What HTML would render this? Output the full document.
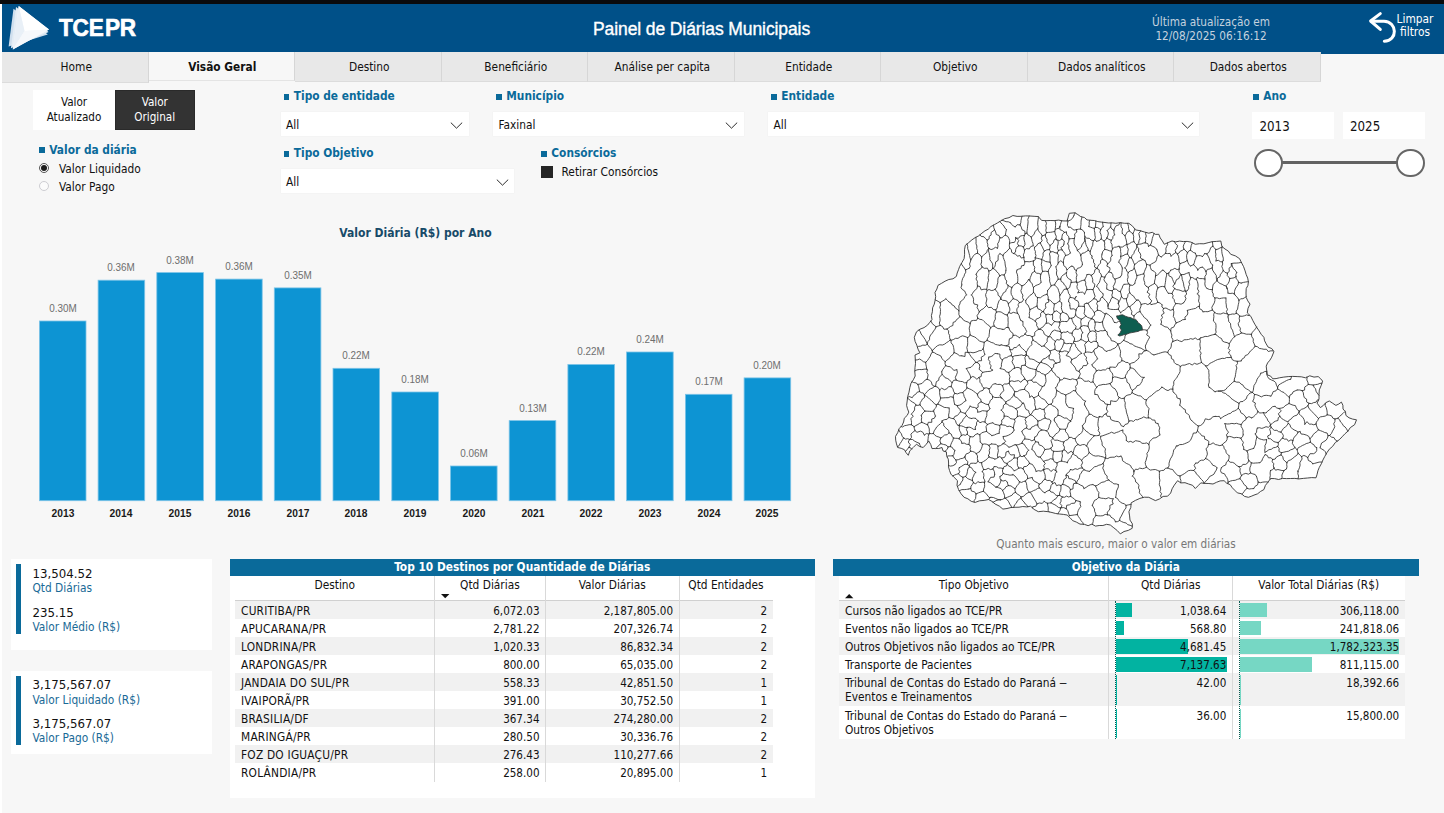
<!DOCTYPE html>
<html lang="pt-BR">
<head>
<meta charset="utf-8">
<title>Painel de Diárias Municipais</title>
<style>
*{box-sizing:border-box;margin:0;padding:0}
html,body{width:1444px;height:813px;overflow:hidden}
body{position:relative;background:#f7f7f7;font-family:"DejaVu Sans Condensed","Liberation Sans",sans-serif;font-size:11.8px;color:#111}
.abs{position:absolute}
.t{position:absolute;white-space:nowrap;line-height:14px}
.b{font-weight:bold}
#topbar{left:0;top:0;width:1444px;height:4px;background:#0a0a0c}
#lstrip{left:0;top:4px;width:2px;height:809px;background:#fff}
#hdr{left:2px;top:4px;width:1442px;height:49.6px;background:#005088}
.tab{position:absolute;top:52.3px;height:29.5px;width:146.5px;background:#e8e8e8;border-right:1px solid #d6d6d6;border-bottom:1px solid #dcdcdc;text-align:center;line-height:30.4px;font-size:11.8px;color:#111;padding-left:3px}
.tab.act{background:#f7f7f7;font-weight:bold;border-bottom:1px solid #e4e4e4;height:29px;padding-left:2px}
.flabel{position:absolute;font-weight:bold;font-size:11.8px;color:#0a6a9a;white-space:nowrap;line-height:14px}
.flabel i{display:inline-block;width:5.8px;height:5.8px;background:#0a6a9a;margin-right:4.5px;vertical-align:0.5px}
.dd{position:absolute;background:#fff;height:24.2px;font-size:11.8px;line-height:26px;padding-left:5.5px;color:#111;box-shadow:0 0 0 0.5px #f1f1f1}
.dd svg{position:absolute;right:5.5px;top:10px}
.card{position:absolute;background:#fff}
.kv{position:absolute;left:32.5px;font-size:13.1px;color:#111;white-space:nowrap;line-height:15px}
.kl{position:absolute;left:32.5px;font-size:11.8px;color:#1a6a96;white-space:nowrap;line-height:14px}
.acc{position:absolute;left:16px;width:4.5px;background:#0a6a9a}
.ttl{position:absolute;background:#0a6a9a;color:#fff;font-weight:bold;font-size:11.8px;text-align:center;line-height:16.5px;height:17px}
.row{position:absolute;height:18px}
.g{background:#f1f1f1}
.w{background:#fff}
.c{position:absolute;white-space:nowrap;line-height:14px;font-size:11.8px;color:#111}
.r{text-align:right;font-size:11.55px}
.vl{position:absolute;width:1px;background:#d9d9d9}
.hl{position:absolute;height:1px;background:#d0d0d0}
.bl{position:absolute;white-space:nowrap;font-family:"Liberation Sans",sans-serif;font-size:11px;color:#6e6e6e;text-align:center;width:60px;line-height:12px;transform:scaleX(0.9)}
.yl{position:absolute;white-space:nowrap;font-family:"Liberation Sans",sans-serif;font-size:11.5px;font-weight:bold;color:#1a1a1a;text-align:center;width:60px;line-height:12px;top:506.8px;transform:scaleX(0.89)}
.bar{position:absolute;background:#0d94d3;border:1px solid #58b4e0;border-bottom-color:#8ecbe9}
</style>
</head>
<body>
<div class="abs" id="topbar"></div>
<div class="abs" id="lstrip"></div>
<div class="abs" id="hdr"></div>

<!-- logo -->
<svg class="abs" style="left:2px;top:4px" width="150" height="49" viewBox="2 4 150 49">
  <polygon points="13.5,8.8 47.8,34.5 8.6,46.4" fill="#cfdfee"/>
  <polygon points="16,7 48.6,32 11,48.2" fill="#e4edf5"/>
  <polygon points="18.7,6 49,29.6 12.8,49.6" fill="#f3f7fb"/>
  <polygon points="18.7,6 49,29.6 24.5,31" fill="#ffffff"/>
  <polygon points="18.7,6 24.5,31 12.8,49.6" fill="#e9f0f7"/>
  <polygon points="24.5,31 49,29.6 12.8,49.6" fill="#f6f8fb"/>
</svg>
<div class="t b" style="left:58.5px;top:13.5px;font-family:'Liberation Sans',sans-serif;font-size:24.8px;line-height:28px;color:#fff;letter-spacing:-0.2px;transform:scaleX(0.91);transform-origin:0 0;-webkit-text-stroke:0.7px #fff">TCE<span style="margin-left:1.5px">PR</span></div>

<div class="t" id="title" style="left:593px;top:18px;font-family:'Liberation Sans',sans-serif;font-size:17.5px;line-height:22px;color:#fff;letter-spacing:-0.1px;-webkit-text-stroke:0.35px #fff">Painel de Diárias Municipais</div>

<div class="t" style="left:1111px;top:14.5px;width:200px;text-align:center;color:#c4d2df;font-size:11.7px;line-height:14px">Última atualização em<br>12/08/2025 06:16:12</div>

<svg class="abs" style="left:1366px;top:10px" width="34" height="36" viewBox="1366 10 34 36">
  <path d="M1380.3 13.6 L1370.6 21 L1380.3 29.4" fill="none" stroke="#fff" stroke-width="3" stroke-linecap="round" stroke-linejoin="round"/>
  <path d="M1371.5 21.2 L1384 21.2 C1397.5 21.5 1398 41 1384.3 41.2" fill="none" stroke="#fff" stroke-width="3" stroke-linecap="round"/>
</svg>
<div class="t" style="left:1390px;top:12.5px;width:50px;text-align:center;color:#fff;font-size:11.8px;line-height:13.8px">Limpar<br>filtros</div>

<!-- tabs -->
<div class="tab" style="left:2px;height:30.3px">Home</div>
<div class="tab act" style="left:148.5px">Visão Geral</div>
<div class="tab" style="left:295px">Destino</div>
<div class="tab" style="left:441.5px">Beneficiário</div>
<div class="tab" style="left:588px">Análise per capita</div>
<div class="tab" style="left:734.5px">Entidade</div>
<div class="tab" style="left:881px">Objetivo</div>
<div class="tab" style="left:1027.5px">Dados analíticos</div>
<div class="tab" style="left:1174px">Dados abertos</div>

<!-- toggle buttons -->
<div class="abs" style="left:33px;top:89.5px;width:82px;height:40.5px;background:#fff;text-align:center;font-size:11.6px;line-height:15px;padding-top:5.6px">Valor<br>Atualizado</div>
<div class="abs" style="left:115px;top:89.5px;width:79.5px;height:40.5px;background:#333;color:#fff;text-align:center;font-size:11.6px;line-height:15px;padding-top:4.6px;border:1px solid #2a2a2a">Valor<br>Original</div>

<!-- Valor da diária -->
<div class="flabel" style="left:39px;top:142.5px"><i></i>Valor da diária</div>
<div class="abs" style="left:39px;top:162.7px;width:10.2px;height:10.2px;border-radius:50%;border:1px solid #555;background:#fff"></div>
<div class="abs" style="left:40.9px;top:164.6px;width:6.4px;height:6.4px;border-radius:50%;background:#1c1c1c"></div>
<div class="t" style="left:59px;top:161.5px">Valor Liquidado</div>
<div class="abs" style="left:39px;top:180.7px;width:10.2px;height:10.2px;border-radius:50%;border:1px solid #cdcdd2;background:#fbfbfb"></div>
<div class="t" style="left:59px;top:179.5px">Valor Pago</div>

<!-- filters -->
<div class="flabel" style="left:283.5px;top:89px"><i></i>Tipo de entidade</div>
<div class="dd" style="left:280.5px;top:111.5px;width:188px">All<svg width="13" height="7" viewBox="0 0 13 7"><path d="M0.8 0.6 L6.5 6.2 L12.2 0.6" fill="none" stroke="#2b2b2b" stroke-width="1"/></svg></div>
<div class="flabel" style="left:496px;top:89px"><i></i>Município</div>
<div class="dd" style="left:493px;top:111.5px;width:250.5px">Faxinal<svg width="13" height="7" viewBox="0 0 13 7"><path d="M0.8 0.6 L6.5 6.2 L12.2 0.6" fill="none" stroke="#2b2b2b" stroke-width="1"/></svg></div>
<div class="flabel" style="left:771px;top:89px"><i></i>Entidade</div>
<div class="dd" style="left:768px;top:111.5px;width:431px">All<svg width="13" height="7" viewBox="0 0 13 7"><path d="M0.8 0.6 L6.5 6.2 L12.2 0.6" fill="none" stroke="#2b2b2b" stroke-width="1"/></svg></div>
<div class="flabel" style="left:283.5px;top:146px"><i></i>Tipo Objetivo</div>
<div class="dd" style="left:280.5px;top:168.5px;width:233.5px">All<svg width="13" height="7" viewBox="0 0 13 7"><path d="M0.8 0.6 L6.5 6.2 L12.2 0.6" fill="none" stroke="#2b2b2b" stroke-width="1"/></svg></div>
<div class="flabel" style="left:541px;top:146px"><i></i>Consórcios</div>
<div class="abs" style="left:541px;top:166px;width:12px;height:12px;background:#252525"></div>
<div class="t" style="left:561.5px;top:165px">Retirar Consórcios</div>

<!-- Ano -->
<div class="flabel" style="left:1253px;top:89px"><i></i>Ano</div>
<div class="abs" style="left:1252px;top:112px;width:82px;height:27px;background:#fff;font-size:13.2px;line-height:29.6px;padding-left:7.5px">2013</div>
<div class="abs" style="left:1342.5px;top:112px;width:82px;height:27px;background:#fff;font-size:13.2px;line-height:29.6px;padding-left:7.5px">2025</div>
<div class="abs" style="left:1268px;top:161.4px;width:143px;height:3px;background:#626262"></div>
<div class="abs" style="left:1254.3px;top:148.5px;width:28.8px;height:28.8px;border-radius:50%;background:#fff;border:2px solid #666"></div>
<div class="abs" style="left:1396.3px;top:148.5px;width:28.8px;height:28.8px;border-radius:50%;background:#fff;border:2px solid #666"></div>

<!-- bar chart -->
<div class="t b" style="left:265.5px;top:226px;width:300px;text-align:center;color:#174a68;font-size:12px">Valor Diária (R$) por Ano</div>
<svg class="abs" style="left:0;top:260px" width="820" height="250" viewBox="0 260 820 250"><g fill="#0d94d3" stroke="#7cc4e8" stroke-width="0.8"><rect x="39.4" y="321.0" width="46.6" height="179.7"/><rect x="98.1" y="280.2" width="46.6" height="220.5"/><rect x="156.8" y="272.6" width="46.6" height="228.1"/><rect x="215.6" y="279.1" width="46.6" height="221.6"/><rect x="274.3" y="287.9" width="46.6" height="212.8"/><rect x="333.0" y="368.3" width="46.6" height="132.4"/><rect x="391.8" y="392.0" width="46.6" height="108.7"/><rect x="450.5" y="466.0" width="46.6" height="34.7"/><rect x="509.2" y="420.6" width="46.6" height="80.1"/><rect x="567.9" y="364.5" width="46.6" height="136.2"/><rect x="626.6" y="352.0" width="46.6" height="148.7"/><rect x="685.4" y="394.3" width="46.6" height="106.4"/><rect x="744.1" y="377.9" width="46.6" height="122.8"/></g></svg>
<div class="bl" style="left:32.7px;top:301.9px">0.30M</div>
<div class="yl" style="left:32.7px">2013</div>
<div class="bl" style="left:91.4px;top:261.1px">0.36M</div>
<div class="yl" style="left:91.4px">2014</div>
<div class="bl" style="left:150.2px;top:253.5px">0.38M</div>
<div class="yl" style="left:150.2px">2015</div>
<div class="bl" style="left:208.9px;top:260.0px">0.36M</div>
<div class="yl" style="left:208.9px">2016</div>
<div class="bl" style="left:267.6px;top:268.8px">0.35M</div>
<div class="yl" style="left:267.6px">2017</div>
<div class="bl" style="left:326.3px;top:349.2px">0.22M</div>
<div class="yl" style="left:326.3px">2018</div>
<div class="bl" style="left:385.1px;top:372.9px">0.18M</div>
<div class="yl" style="left:385.1px">2019</div>
<div class="bl" style="left:443.8px;top:446.9px">0.06M</div>
<div class="yl" style="left:443.8px">2020</div>
<div class="bl" style="left:502.5px;top:401.5px">0.13M</div>
<div class="yl" style="left:502.5px">2021</div>
<div class="bl" style="left:561.2px;top:345.4px">0.22M</div>
<div class="yl" style="left:561.2px">2022</div>
<div class="bl" style="left:619.9px;top:332.9px">0.24M</div>
<div class="yl" style="left:619.9px">2023</div>
<div class="bl" style="left:678.7px;top:375.2px">0.17M</div>
<div class="yl" style="left:678.7px">2024</div>
<div class="bl" style="left:737.4px;top:358.8px">0.20M</div>
<div class="yl" style="left:737.4px">2025</div>

<!-- map -->
<svg class="abs" style="left:880px;top:200px" width="500" height="345" viewBox="880 200 500 345">
<path d="M915.0 355.0L919.9 352.8L918.0 349.1L916.8 345.1L915.1 341.4L914.3 337.3L916.5 331.8L920.0 329.2L924.1 327.6L927.6 325.1L929.8 322.3L932.0 319.6L931.4 315.6L932.4 311.7L932.6 307.8L934.3 304.1L935.1 300.4L935.7 296.6L935.0 292.5L936.9 289.0L938.0 285.3L941.6 283.3L945.1 281.2L948.8 279.5L953.0 278.8L956.4 276.4L957.2 273.0L958.5 269.7L959.7 266.4L961.9 262.6L964.1 258.7L964.6 254.3L964.5 249.8L965.3 245.4L968.6 242.7L971.9 239.9L975.2 237.6L978.8 235.8L981.9 233.2L984.9 230.9L988.2 229.2L990.9 226.5L994.2 224.8L997.5 222.9L1000.7 221.0L1004.6 218.7L1009.0 217.7L1012.9 215.5L1017.1 216.4L1021.3 216.3L1025.6 215.9L1029.8 216.0L1034.1 216.3L1038.3 216.6L1041.6 220.4L1045.8 220.7L1050.1 220.5L1054.4 220.6L1058.6 220.1L1062.9 220.9L1067.1 221.0L1068.2 217.1L1069.3 213.3L1074.9 212.8L1077.9 214.6L1080.8 216.7L1084.4 217.5L1087.0 219.9L1090.6 220.3L1094.3 220.5L1097.8 221.6L1101.4 222.1L1105.0 222.5L1108.6 223.0L1112.2 222.9L1115.8 223.3L1120.2 222.7L1124.5 223.3L1128.9 223.3L1132.6 226.2L1135.5 229.9L1140.0 230.7L1144.4 232.0L1148.8 233.2L1152.3 232.3L1155.4 234.4L1158.8 234.3L1160.2 237.9L1162.4 241.0L1164.3 244.3L1168.1 242.6L1172.0 241.0L1175.7 241.9L1179.6 241.1L1183.3 241.6L1187.1 241.4L1190.9 242.1L1195.3 244.3L1199.5 243.7L1203.9 243.8L1208.1 242.7L1212.2 241.7L1216.5 241.4L1220.8 241.0L1221.9 246.5L1225.0 249.0L1228.3 251.1L1230.7 254.3L1235.4 255.9L1239.6 258.7L1241.5 262.7L1243.6 266.7L1245.1 270.9L1246.2 274.6L1247.7 278.1L1248.4 281.9L1247.9 285.5L1246.2 288.6L1246.0 293.0L1246.2 297.4L1247.8 300.9L1250.0 304.1L1248.0 308.3L1247.3 312.9L1250.8 316.3L1252.9 320.7L1254.8 324.2L1256.9 327.6L1259.1 330.9L1261.2 334.3L1263.9 337.3L1264.6 340.8L1266.2 343.9L1268.1 347.1L1271.8 348.6L1273.9 351.7L1271.7 357.2L1269.9 360.2L1267.6 362.9L1266.2 366.1L1266.7 370.5L1267.3 374.9L1270.6 376.1L1272.8 378.8L1276.1 378.6L1279.4 377.8L1283.8 377.1L1288.2 376.6L1292.6 376.4L1297.1 376.6L1301.3 376.8L1305.5 377.8L1309.8 375.8L1314.0 377.1L1318.2 376.6L1320.6 378.7L1322.6 381.1L1321.1 385.6L1319.3 389.9L1319.0 394.4L1319.0 399.0L1317.1 403.2L1320.4 407.6L1323.4 405.4L1325.9 402.6L1329.3 401.0L1332.6 403.2L1335.9 405.4L1338.8 404.0L1341.4 402.1L1342.9 405.3L1343.0 409.0L1345.5 411.8L1345.9 415.4L1349.0 417.8L1352.6 419.1L1356.5 419.8L1354.6 424.7L1350.3 427.6L1348.0 431.1L1344.9 433.8L1342.1 436.8L1339.2 439.8L1335.3 442.5L1332.6 446.4L1329.3 449.2L1326.9 452.7L1324.8 456.4L1322.9 460.0L1321.3 463.8L1319.3 467.4L1317.9 470.8L1317.1 474.3L1316.0 477.8L1311.7 477.6L1307.5 478.0L1303.3 478.4L1299.0 478.9L1294.8 478.4L1290.5 478.5L1286.5 478.6L1282.5 478.4L1278.6 479.5L1274.6 478.6L1270.6 478.5L1268.1 482.0L1265.4 485.4L1263.9 489.6L1260.6 491.4L1257.6 493.8L1254.0 495.1L1251.2 496.3L1248.4 497.3L1244.5 496.4L1241.4 493.7L1237.4 492.9L1234.8 490.3L1232.3 487.8L1230.2 484.7L1226.7 483.2L1224.1 480.7L1220.1 480.9L1216.5 482.3L1213.0 484.0L1208.9 483.5L1204.9 483.4L1200.8 482.9L1198.1 485.7L1195.3 488.5L1192.6 485.3L1188.6 484.0L1185.0 482.7L1180.9 482.9L1177.6 480.7L1174.3 485.1L1172.1 488.8L1170.7 493.0L1167.6 496.2L1163.1 496.4L1159.4 499.0L1155.4 500.6L1152.1 499.0L1148.8 497.3L1144.3 497.2L1139.9 498.4L1135.4 500.4L1131.1 502.9L1130.8 507.5L1128.9 511.7L1129.6 515.9L1130.0 520.1L1132.4 523.9L1132.2 528.3L1128.3 530.4L1124.0 531.5L1120.3 533.9L1117.3 530.6L1113.8 527.8L1110.3 525.0L1106.6 524.3L1102.9 525.5L1099.2 525.5L1095.5 526.1L1091.8 524.1L1088.1 525.7L1084.3 524.3L1080.0 524.1L1076.4 522.1L1072.6 520.6L1070.0 517.7L1067.1 515.0L1063.3 514.4L1059.5 514.0L1055.7 513.5L1052.0 512.5L1048.3 511.7L1043.3 511.2L1038.3 511.7L1034.1 509.4L1030.6 506.2L1026.8 506.9L1022.8 506.5L1019.0 507.2L1015.1 507.3L1011.0 507.5L1007.0 508.5L1002.9 509.1L999.3 506.1L995.1 504.0L992.0 501.4L988.5 499.5L984.1 500.4L979.5 500.8L975.2 502.4L971.2 501.3L967.9 498.8L964.1 497.3L961.0 493.7L958.6 489.6L957.0 485.3L957.5 480.7L954.2 477.4L950.9 474.1L949.5 470.5L948.5 466.9L948.6 463.0L948.3 459.2L946.6 455.7L946.4 451.9L943.0 450.9L942.0 447.5L938.7 448.5L935.4 448.4L932.0 448.6L930.8 444.6L928.7 440.9L926.1 444.4L923.2 447.5L919.6 446.5L916.5 444.2L913.2 447.5L909.8 450.8L908.3 455.3L906.1 452.7L904.4 449.7L901.2 448.3L897.7 447.5L896.5 443.9L895.7 440.2L895.5 436.4L897.7 432.7L899.2 428.6L902.1 425.4L903.6 422.0L904.3 418.2L907.2 415.4L908.8 412.1L907.5 408.8L906.6 405.4L907.2 401.0L907.7 396.6L909.0 392.2L909.8 387.7L911.0 383.3L913.3 379.8L915.2 376.0L914.8 371.8L915.0 367.6L915.5 363.4L915.3 359.2L915.0 355.0Z" fill="#fff" stroke="#333" stroke-width="0.9" stroke-linejoin="round"/>
<path d="M1348.0 431.1L1347.5 430.8L1346.5 428.8L1345.1 427.0L1343.2 425.6L1342.2 423.5L1340.5 422.0L1339.7 419.8L1337.9 418.3M1345.2 411.4L1344.5 411.9L1342.9 413.5L1341.1 415.0L1339.5 416.7L1337.9 418.3M1115.4 521.8L1117.7 521.6L1119.6 520.4M1119.6 520.4L1121.6 521.6L1123.8 522.5L1126.1 523.0L1127.8 524.7L1130.1 525.3L1132.3 526.2L1132.3 526.2M987.2 240.1L987.1 242.3L987.8 244.3L987.7 246.4L988.9 248.3M988.9 248.3L991.1 249.6L993.2 248.9L995.4 247.3L997.5 248.2M994.6 229.8L995.7 232.0L996.3 234.5L999.0 235.5L1000.0 237.8M994.6 229.8L992.9 231.2L991.1 232.5L991.1 235.1L989.2 236.3L989.1 238.9L987.2 240.1M1000.0 237.8L999.4 239.8L998.8 241.9L997.6 243.8L998.0 246.1L997.5 248.2M970.8 259.9L972.1 257.9L973.4 255.8L975.1 254.1L977.5 253.1M970.8 259.9L970.0 257.8L969.6 255.5L969.0 253.2L968.5 251.0L967.7 248.8L967.7 246.4L967.1 244.2L967.0 244.0M977.5 253.1L977.6 250.7L976.7 248.4L976.9 246.0L976.0 243.8L976.1 241.3L976.0 239.0L975.9 237.3M988.8 248.6L987.3 250.2L986.7 252.6L984.8 253.9L983.3 255.5L981.6 256.9M981.6 256.9L979.8 254.7L977.5 253.1M988.9 248.3L988.8 248.6M987.2 240.1L985.5 238.6L984.0 236.8L981.2 236.4L980.0 234.8M993.5 225.1L993.5 225.3L993.8 227.6L994.6 229.8M1106.9 237.9L1107.9 235.5L1108.4 233.0L1107.2 230.5M1106.9 237.9L1108.9 239.4L1111.3 240.2M1111.3 240.2L1112.7 238.6L1113.0 236.4L1114.5 234.9M1107.2 230.5L1108.9 228.8L1110.6 227.0M1110.6 227.0L1111.9 229.0L1113.9 230.3M1113.9 230.3L1114.0 232.6L1114.5 234.9M1015.6 237.5L1015.5 240.4L1014.4 242.4L1011.8 242.6L1009.5 243.3M1006.4 229.6L1005.8 232.3L1005.4 235.1M1010.5 222.8L1011.8 224.5L1013.3 226.0L1015.3 226.9M1005.4 235.1L1007.9 236.5L1008.9 238.5L1009.7 240.6L1009.5 243.3M999.9 221.5L1000.8 222.8L1002.4 224.4L1003.9 226.0L1004.9 228.0L1006.4 229.6M1000.0 237.8L1002.2 237.8L1003.6 236.1L1005.4 235.1M1002.0 220.2L1003.9 220.8L1006.1 221.7L1008.4 221.8L1010.5 222.8M1120.0 222.7L1119.0 224.8L1116.1 225.8L1114.8 227.9L1113.9 230.3M1110.6 227.0L1110.9 224.7L1111.0 222.9M1103.2 226.7L1102.8 224.4L1102.6 222.2M959.1 490.5L959.7 490.5L961.9 489.6L964.2 489.6L966.5 489.4L968.8 489.0M957.4 486.4L958.3 485.8L960.2 484.4M952.7 475.9L954.2 475.2L956.3 474.4L958.5 473.7M960.2 484.4L961.4 482.1L962.9 480.0L962.9 477.3M958.5 473.7L960.3 475.9L962.9 477.3M974.2 502.1L974.1 500.7L975.6 498.5L975.8 496.2L976.0 493.9M968.8 489.0L970.7 488.5M976.0 493.9L974.5 491.8L971.5 491.1L970.7 488.5M970.2 323.6L969.9 325.8L969.2 328.1L969.5 330.4L969.9 332.6L970.1 334.9M970.1 334.9L969.2 336.6L967.6 337.6M950.3 339.8L949.6 337.7L949.6 335.3L948.5 333.3L948.7 330.8L946.9 329.1M950.3 339.8L951.0 340.3M959.9 316.5L958.5 318.3L956.6 319.5L955.4 321.6L953.1 322.4L952.9 325.5L950.6 326.4L948.8 327.8L946.9 329.1M959.9 316.5L962.0 318.0L963.5 320.2L965.7 321.3L968.2 322.1L970.2 323.6M951.0 340.3L953.3 339.6L955.5 338.3L958.0 338.4L960.2 336.8L962.5 335.8L965.0 336.5L967.6 337.6M930.7 321.2L931.1 321.2L932.3 323.7L934.2 325.2L936.0 326.8M918.9 330.1L920.3 331.7L921.1 334.0L922.6 335.8L924.0 337.8L925.3 339.7L926.3 341.9L927.3 344.1M927.3 344.1L927.8 341.7L929.5 339.8L929.6 337.1L930.6 335.0L932.3 333.1L933.6 331.0L935.1 329.1L936.0 326.8M935.2 299.9L936.1 300.3L938.1 301.3L940.1 302.6M940.2 325.4L939.3 323.1L940.1 320.8L940.0 318.6L939.6 316.3L940.3 314.0L940.4 311.7L940.5 309.4L939.8 307.2L940.6 304.9L940.1 302.6M940.2 325.4L938.1 326.1L936.0 326.8M950.3 339.8L948.6 341.4L946.6 342.6L944.7 344.1L942.5 345.0L939.7 344.8L937.5 345.7L935.6 347.2L933.9 349.0L932.2 350.7M927.3 344.3L928.6 345.8L929.7 347.5L931.4 348.8L932.2 350.7M946.9 329.1L943.9 329.2L942.5 326.5L940.2 325.4M1318.5 400.0L1317.5 399.8L1316.0 402.2L1313.6 402.6L1311.6 403.6L1309.0 403.3M1319.0 395.2L1318.5 394.9L1317.2 393.1L1316.0 391.2L1315.6 388.8L1314.1 387.2L1313.2 385.1M1309.0 403.3L1306.6 401.9L1306.6 399.1L1304.3 397.6L1303.6 395.3L1303.3 392.7L1302.1 390.6M1302.1 390.6L1304.6 390.1L1304.7 387.1L1306.5 385.8L1308.3 384.5M1313.2 385.1L1310.8 384.7L1308.3 384.5M1321.9 383.2L1319.9 383.4L1317.8 384.3L1315.5 384.6L1313.2 385.1M1337.9 418.3L1335.0 419.0M1325.4 403.2L1325.2 405.5L1326.3 407.8L1326.9 410.1L1327.2 412.4L1327.2 414.8M1335.0 419.0L1332.9 418.2L1331.6 415.9L1329.4 415.2L1327.2 414.8M1337.3 441.1L1337.3 441.1L1335.3 439.9L1333.9 437.5L1331.4 437.2L1329.7 435.4M1335.0 419.0L1334.9 421.6L1333.7 423.8L1334.8 426.7L1333.8 428.9L1332.5 431.1L1331.5 433.4L1329.7 435.4M1307.9 405.7L1309.0 403.3M1307.9 405.7L1308.8 408.0L1310.3 409.9L1312.0 411.6L1313.6 413.3L1315.3 415.0L1316.9 416.8L1318.5 418.5M1327.2 414.8L1325.2 416.1L1322.8 416.5L1320.4 416.9L1318.5 418.5M1326.1 454.1L1325.5 451.9L1324.0 450.3L1321.9 449.1L1320.1 447.8M1320.1 447.8L1320.8 445.3L1321.6 443.0L1323.9 441.6L1326.1 440.2L1327.4 438.2L1328.1 435.7M1329.7 435.4L1328.1 435.7M1306.9 377.1L1307.1 377.5L1306.8 380.0L1307.9 382.2L1308.3 384.5M1222.2 246.7L1222.0 247.1M1222.0 247.1L1221.7 249.3L1221.8 251.6L1222.1 253.8L1222.7 256.0L1223.3 258.2L1223.2 260.5M1020.0 224.9L1017.1 224.7L1015.3 226.9M1015.6 237.5L1016.5 238.2M1020.0 224.9L1021.3 227.1L1022.0 229.7L1024.8 231.0L1025.1 233.8M1025.1 233.8L1024.5 235.4M1016.5 238.2L1018.7 238.2L1020.2 236.1L1022.3 235.6L1024.5 235.4M1084.7 280.1L1082.7 280.4L1080.7 281.1L1078.8 282.2L1076.7 282.3M1086.9 289.6L1086.6 287.2L1085.6 284.9L1085.7 282.4L1084.7 280.1M1086.9 289.6L1085.6 291.7L1084.7 294.1M1076.7 282.3L1077.5 284.3L1076.9 286.5L1077.3 288.6L1078.9 290.5L1077.9 292.8M1084.7 294.1L1082.7 292.2L1080.4 292.3L1077.9 292.8M1059.9 295.3L1061.4 293.5L1062.7 291.6L1063.9 289.5L1066.5 288.9M1059.9 295.3L1059.4 292.9L1058.6 290.7L1058.0 288.4L1056.2 286.7L1054.6 284.9M1058.2 279.2L1056.9 281.0L1055.5 282.8L1054.6 284.9M1058.2 279.2L1060.7 279.1M1060.7 279.1L1061.2 281.4L1063.4 282.8L1064.3 284.9L1066.1 286.5L1066.5 288.9M1031.2 237.1L1029.7 235.8L1027.9 234.9L1026.9 233.1M1031.2 237.1L1032.9 235.7L1034.2 234.0L1034.9 231.9L1036.2 230.2L1037.8 228.8M1026.9 233.1L1027.0 230.8L1027.4 228.5L1027.6 226.2L1027.9 224.0L1028.1 221.7L1027.8 219.3L1028.8 217.1L1029.2 216.0M1037.8 228.8L1038.1 226.6L1037.7 224.4L1037.8 222.1L1038.1 219.9L1038.4 217.6L1038.4 216.7M1020.0 224.9L1020.8 222.8L1021.0 220.4L1021.5 218.2L1022.0 216.2M1026.9 233.1L1025.1 233.8M1103.2 226.7L1101.5 227.9L1100.7 229.8M1106.9 237.9L1105.8 239.7L1104.1 241.0M1104.1 241.0L1102.5 240.1L1101.3 238.9M1100.7 229.8L1099.9 232.1L1100.9 234.3L1101.4 236.6L1101.3 238.9M1095.8 221.0L1095.8 222.8L1095.6 225.1L1095.3 227.4M1100.7 229.8L1099.1 228.5L1097.4 227.5L1095.3 227.4M1009.5 243.3L1009.3 245.8L1009.7 248.2M1009.7 248.2L1008.0 250.0L1006.4 251.9L1004.3 253.3L1003.0 255.5M999.9 253.6L1001.4 254.5L1003.0 255.5M1037.8 228.8L1038.5 230.8L1039.8 232.5L1041.3 234.0L1042.2 235.9M1042.2 235.9L1041.2 238.1L1042.2 240.8L1040.3 242.8M1031.2 237.1L1031.7 239.2L1032.2 241.4L1033.0 243.5L1033.2 245.8M1040.3 242.8L1037.9 243.7L1036.5 245.9L1034.5 247.3M1051.2 285.8L1050.4 283.5L1049.6 281.2L1049.7 278.7L1049.3 276.3L1048.8 274.0L1048.1 271.6M1042.6 271.4L1045.4 271.2L1048.1 271.6M1047.6 290.4L1049.0 288.9L1050.1 287.3L1051.2 285.8M1042.6 271.4L1040.8 274.3M1041.1 282.2L1040.6 279.6L1040.4 277.0L1040.8 274.3M970.8 259.9L970.3 262.0L969.5 264.0L970.3 266.3L969.2 268.2M981.6 256.9L981.5 259.4L981.6 261.9L980.9 264.4L982.1 266.9M982.1 266.9L980.8 268.9L978.7 270.2L977.3 272.2L976.1 274.3M961.4 263.5L961.6 264.3L962.9 266.2L964.3 268.0L965.5 269.9M969.2 268.2L967.4 269.1L965.5 269.9M958.9 310.8L957.3 309.3L955.4 308.1L954.3 306.0L952.2 305.0L951.0 303.1L949.0 302.0L947.5 300.4L945.9 298.8M958.9 310.8L959.0 308.4L958.8 305.9L959.9 304.0L960.3 301.7L962.4 300.3L963.9 298.6L964.9 296.6L966.4 294.9M966.4 294.9L965.5 292.9L964.6 290.9L962.3 289.5L961.0 287.7L961.8 284.9M959.9 316.5L958.9 314.7L958.9 312.8L958.9 310.8M940.1 302.6L942.1 301.4L944.1 300.2L945.9 298.8M971.5 295.0L972.7 293.2L973.8 291.3L975.6 289.9L977.0 288.2L977.5 286.0M965.5 269.9L965.8 272.2L964.6 274.2L964.0 276.3L962.7 278.3L962.1 280.4L961.6 282.6L961.8 284.9M977.5 286.0L977.2 283.7L977.4 281.3L976.0 279.0L977.0 276.5L976.1 274.3M897.4 446.7L899.1 445.7L900.0 443.6L901.3 441.8L902.5 439.8L903.6 437.9M903.6 437.9L902.1 436.2L901.4 433.8L899.9 432.0L898.8 429.8L898.8 429.8M940.9 443.7L938.9 445.2L937.3 447.2L935.9 448.4M940.9 443.7L943.4 444.4L946.0 445.0L948.1 446.9M948.1 446.9L947.3 449.3L945.1 451.1L945.1 451.5M929.6 433.5L929.0 434.0M929.6 433.5L931.5 433.7L933.4 433.5M929.0 434.0L928.3 436.4L928.1 438.7L927.8 441.0L928.0 441.9M940.9 443.7L939.9 440.9L940.8 438.0M933.4 433.5L934.9 435.2L936.7 436.4L938.9 437.0L940.8 438.0M942.1 421.9L943.7 423.4L943.8 425.9L945.4 427.4L946.8 429.0L948.7 430.4L949.0 432.7M942.0 420.9L942.1 421.9M953.6 418.7L955.5 420.6L956.2 423.2L957.8 425.2M953.6 418.7L951.2 418.3L948.9 417.3M942.0 420.9L944.3 419.7L947.1 419.3L948.9 417.3M940.8 438.0L942.8 436.7L944.6 435.0L947.2 434.7L949.0 432.9M950.3 446.6L948.1 446.9M950.3 446.6L950.9 444.4L951.8 442.3L952.9 440.3L953.4 438.0M953.4 438.0L952.0 436.2L951.2 434.0L949.0 432.9M942.1 421.9L940.4 423.7L938.5 425.3L936.7 426.9L935.5 429.0L934.1 430.9L933.4 433.5M948.5 465.6L950.6 466.1L952.9 465.7L954.9 464.6M958.5 473.7L959.8 471.8L958.7 469.6L959.3 467.6M962.9 477.3L965.6 476.5M965.6 476.5L967.5 478.5L970.0 479.6L972.5 480.6M970.7 488.5L971.0 486.2L972.3 484.5L973.4 482.6M972.5 480.6L973.4 482.6M1115.4 521.8L1114.5 519.5L1112.8 518.3L1111.0 517.2L1110.0 515.2L1107.6 514.8M1092.2 524.4L1092.6 523.7L1093.2 521.5L1093.3 519.0L1094.7 517.3L1095.9 515.4M1107.6 514.8L1105.2 514.4L1102.9 515.7L1100.6 515.9L1098.3 515.8L1095.9 515.4M965.6 476.5L966.9 474.2L967.4 471.7L967.8 469.0L969.4 466.9M959.3 467.6L961.2 466.6L963.0 465.3L965.0 464.2L967.4 464.5M967.4 464.5L969.1 465.6M969.4 466.9L969.1 465.6M972.5 480.6L972.4 478.2L973.5 476.2L974.3 474.1L975.8 472.3M969.4 466.9L971.5 467.7L972.7 469.6L973.9 471.3L975.8 472.3M971.5 295.0L972.9 296.9L973.6 299.2L973.4 301.8L974.1 304.0L977.8 304.9L977.1 307.7L978.4 309.7L979.3 311.9M970.2 323.6L971.2 320.9L973.6 320.4L976.5 320.4L977.7 318.1M979.3 311.9L978.3 313.8L977.0 315.7L977.7 318.1M1328.1 435.7L1327.1 433.0L1324.7 432.5L1322.7 431.5L1320.5 430.7L1318.4 429.8M1318.5 418.5L1317.8 420.4L1316.4 422.0L1316.0 424.0M1316.0 424.0L1316.6 426.0L1317.4 427.9L1318.4 429.8M1310.5 442.1L1311.9 443.7L1313.8 444.6L1314.8 446.6L1316.7 447.6M1310.5 442.1L1310.3 440.3L1309.9 438.6M1318.4 429.8L1316.8 431.6L1314.7 433.0L1313.1 434.8L1311.8 437.0L1309.9 438.6M1204.2 483.3L1205.3 481.6L1207.1 480.1L1208.5 478.3L1209.7 476.4L1212.0 475.4L1214.0 474.1L1215.0 472.0L1216.3 470.1L1217.0 467.7M1204.0 483.3L1203.1 481.1L1201.4 479.4L1199.8 477.7L1198.5 475.7L1196.5 474.2L1195.5 471.9L1193.5 470.5M1193.5 470.5L1195.7 468.5L1194.1 465.3L1195.7 463.1M1195.7 463.1L1198.0 463.0L1199.4 461.0L1201.4 460.2L1203.8 460.2L1205.4 458.6M1217.0 467.7L1215.2 466.1L1212.7 465.2L1211.4 462.9L1209.6 461.2L1207.9 459.4L1205.4 458.6M1205.4 458.6L1206.6 456.4L1207.4 454.1L1207.0 451.6L1206.0 448.9L1207.8 446.8L1208.5 444.5M1177.8 445.8L1179.7 444.6L1182.5 444.5L1184.7 443.7L1186.8 442.8L1188.8 441.8L1190.5 440.3L1191.6 437.9L1192.6 435.5L1193.4 433.0L1196.3 433.0L1197.4 430.8M1197.4 430.8L1199.0 432.4L1200.5 434.0L1201.8 435.8L1204.5 436.4L1204.7 439.1L1207.0 440.1L1208.9 441.4L1208.5 444.5M1299.4 411.2L1299.1 413.9L1300.9 415.7L1302.9 417.4L1304.0 419.5L1304.7 421.8L1304.8 424.3M1299.2 411.1L1298.2 413.4L1296.9 415.2L1294.6 415.9L1292.6 417.1L1291.3 418.9L1289.3 420.0L1288.0 421.9M1288.2 423.3L1290.0 424.7L1290.6 427.2L1292.3 428.6L1294.1 429.9L1296.2 430.8L1298.0 432.1M1298.0 432.1L1300.0 431.5M1316.0 424.0L1313.8 424.8L1311.5 424.1L1309.3 424.2L1307.0 421.6L1304.8 424.3M1307.9 405.7L1306.0 407.3L1303.8 408.6L1301.3 409.4L1299.4 411.2M1309.9 438.6L1308.6 436.2L1306.4 435.1L1303.9 434.3L1301.1 434.0L1300.0 431.5M1241.5 262.5L1240.8 262.5L1238.6 262.9L1236.3 263.1L1234.0 263.1L1231.7 263.5M1236.7 272.5L1235.4 270.3L1233.3 268.5L1232.3 266.1L1231.7 263.5M1231.7 263.5L1231.3 263.6M1227.5 273.2L1229.3 271.1L1229.0 268.2L1231.4 266.4L1231.3 263.6M1227.5 273.2L1227.2 275.5L1228.6 277.0L1229.8 278.5M1236.7 272.5L1235.8 274.5L1236.0 276.6M1236.0 276.6L1234.1 277.8L1232.0 278.2L1229.8 278.5M1222.0 247.1L1219.9 248.0L1218.0 249.1L1215.8 249.6M1215.8 249.6L1214.5 247.9L1212.9 246.3M1212.3 241.7L1212.4 241.7L1212.7 244.0L1212.9 246.3M1077.4 250.4L1079.5 248.9L1081.3 247.2L1082.0 244.8L1083.4 242.9L1084.7 241.0L1084.7 238.2M1084.7 238.2L1085.3 240.2L1085.5 242.3L1085.9 244.4L1086.7 246.4L1087.9 248.2L1088.2 250.3M1077.4 250.4L1078.6 252.0L1080.2 253.5L1080.7 255.6M1080.7 255.6L1082.0 253.4L1084.4 252.8L1086.3 251.6L1088.2 250.3M1091.2 275.3L1089.2 274.3L1087.0 274.6M1091.2 275.3L1093.2 274.1L1094.5 272.3L1094.9 269.7L1096.8 268.4M1096.8 268.4L1094.5 266.9L1094.9 264.2L1093.5 262.3L1093.6 259.8L1091.9 258.0M1066.5 288.9L1067.3 289.1M1067.3 289.1L1068.1 291.2L1068.6 293.4L1070.0 295.2L1070.2 297.5M1059.7 301.1L1061.7 303.0M1059.9 295.3L1059.6 297.2L1060.1 299.1L1059.7 301.1M1070.2 297.5L1068.8 299.2L1068.6 301.5M1035.2 257.8L1036.0 255.6L1035.3 253.5L1035.4 251.4L1034.4 249.4L1034.5 247.3M1040.3 242.8L1041.2 244.9L1042.4 246.9L1043.3 249.1L1044.4 251.1M1035.2 257.8L1037.3 258.3L1039.5 258.8L1041.6 259.5M1044.4 251.1L1043.0 253.0L1043.2 255.4L1042.5 257.5L1041.6 259.5M1033.5 260.9L1035.3 259.8L1035.2 257.8M1033.5 260.9L1033.3 263.0L1033.4 265.2L1034.9 267.1L1034.3 269.3L1034.7 271.4M1040.8 274.3L1038.8 273.4L1036.4 273.2L1034.7 271.4M1042.6 271.4L1042.0 269.1L1041.9 266.7L1041.3 264.4L1041.8 261.9L1041.6 259.5M1058.2 279.2L1057.8 277.1L1056.7 275.1L1056.4 273.0L1056.8 270.7L1056.3 268.6L1055.9 266.5M1054.6 284.9L1052.9 285.1L1051.2 285.8M1048.1 271.6L1048.8 269.4L1050.2 267.6L1051.2 265.5M1041.6 259.5L1043.7 260.4L1045.7 261.5L1047.9 261.9L1050.1 262.2M1051.2 265.5L1050.1 262.2M1076.4 270.4L1074.5 269.5L1073.9 267.1L1071.9 266.1M1076.4 270.4L1076.0 272.7L1077.1 275.0L1076.3 277.3L1076.4 279.6L1076.4 281.9M1076.4 281.9L1073.8 282.2L1071.2 282.4M1071.2 282.4L1071.1 280.0L1068.5 278.7L1067.0 276.8L1066.3 274.7L1066.6 272.0M1071.9 266.1L1069.9 267.0L1068.4 268.6L1066.9 270.1M1082.4 264.5L1082.2 262.2L1081.1 260.1L1081.2 257.8L1080.7 255.6M1082.4 264.5L1081.5 266.6L1079.7 267.7L1077.4 268.4L1076.4 270.4M1076.7 282.3L1076.4 281.9M1084.7 280.1L1085.5 278.2L1086.4 276.5L1087.0 274.6M1067.3 289.1L1069.7 287.5L1070.3 284.9L1071.2 282.4M1070.2 297.5L1072.3 297.7L1074.5 298.5L1076.2 296.5M1060.7 279.1L1061.4 276.7L1063.1 275.1L1065.1 273.8L1066.6 272.0M1063.4 262.9L1060.8 260.7L1058.2 262.9M1063.4 262.9L1063.8 265.7L1066.1 267.5L1066.9 270.1M1058.2 262.9L1057.5 265.0L1055.9 266.5M1167.7 352.4L1168.6 350.1L1170.6 348.4L1171.3 346.1L1171.4 343.5L1172.8 341.5M1167.7 352.4L1168.9 354.5L1171.2 355.6L1171.4 358.6L1173.6 359.8L1174.2 362.4L1175.9 364.1L1178.4 364.9L1180.3 366.4M1172.8 341.5L1175.0 340.7L1177.2 339.9L1179.6 341.0L1181.9 341.6L1184.0 339.8L1186.3 339.7L1188.5 339.5L1190.7 338.6L1193.0 339.3L1195.2 337.9L1197.6 339.6L1199.8 339.0M1180.3 366.4L1182.5 365.2L1184.9 365.1L1187.2 364.2L1189.5 363.5L1192.2 365.0L1194.4 363.3L1197.0 364.3L1199.3 363.4L1201.5 362.5M1201.5 362.5L1201.0 360.2L1200.5 357.9L1200.2 355.6L1201.2 353.1L1199.6 350.9L1200.5 348.4L1200.0 346.1L1199.9 343.8L1200.4 341.4L1199.8 339.0M1046.4 232.7L1045.8 230.3L1046.3 228.0L1045.8 225.6L1046.5 223.3L1045.4 220.9L1045.5 220.7M1046.4 232.7L1048.5 232.4L1050.6 232.3L1052.7 231.9L1054.8 231.5M1054.9 220.5L1055.0 220.9L1055.7 223.0L1055.6 225.4L1055.4 227.8L1055.1 230.3M1042.2 235.9L1045.3 234.8M1045.3 234.8L1046.4 232.7M1054.8 231.5L1055.2 234.0L1056.3 236.3L1055.9 238.9M1045.3 234.8L1045.7 237.2L1047.0 239.2L1047.0 241.7L1048.4 243.6L1050.0 245.5M1055.9 238.9L1054.0 240.1L1053.4 242.6L1051.8 244.1L1050.0 245.5M1058.2 262.9L1058.0 260.4L1058.1 257.9L1058.6 255.4L1057.2 253.1M1050.1 262.2L1050.0 260.2L1050.1 258.1L1050.0 256.0L1049.4 253.9L1050.5 251.9M1057.2 253.1L1055.0 252.7L1052.9 251.6L1050.5 251.9M1044.4 251.1L1046.8 249.8L1049.5 249.6M1050.0 245.5L1050.0 247.6L1049.5 249.6M1049.5 249.6L1050.5 251.9M1063.4 262.9L1063.5 260.3L1064.2 257.8L1065.5 255.5M1070.4 253.0L1068.2 254.8L1065.5 255.5M1055.1 230.3L1056.5 228.7L1058.9 228.4L1059.9 226.5M1061.7 220.7L1061.1 222.3L1060.5 224.4L1059.9 226.5M1089.9 220.2L1089.1 222.1L1089.3 224.3L1088.8 226.6M1095.3 227.4L1094.4 228.4M1094.4 228.4L1092.5 227.9L1090.6 227.2L1088.8 226.6M1080.6 229.0L1078.5 229.2L1076.5 229.7M1080.6 229.0L1080.7 226.7L1081.0 224.5L1081.0 222.2L1081.2 220.0L1081.9 217.7L1081.7 216.9M1073.8 215.8L1074.6 213.6L1075.0 212.8M1077.3 250.4L1076.7 248.0L1075.1 245.9L1074.1 243.6L1074.0 241.1L1074.3 238.5M1084.7 238.2L1084.9 236.7M1074.3 238.5L1074.9 236.3L1074.6 233.9L1076.8 232.1L1076.5 229.7M1084.9 236.7L1084.5 234.6L1084.4 232.4M1084.4 232.4L1082.9 230.3L1080.6 229.0M1068.5 227.2L1070.7 227.2L1072.3 229.1L1074.1 230.1L1076.5 229.6M1067.9 221.1L1067.6 223.2L1067.4 225.3L1068.5 227.2M1067.9 221.1L1070.5 220.0L1072.5 218.3L1073.8 215.8M1067.2 220.5L1067.9 221.1M1016.5 238.2L1018.7 240.4L1017.4 243.5L1018.7 245.8M1024.5 235.4L1023.8 237.7L1024.1 240.0L1024.8 242.4L1025.0 244.8L1023.4 247.0M1023.4 247.0L1021.2 245.9L1018.7 245.8M1033.2 245.8L1030.8 246.5L1029.3 248.9L1026.4 248.6L1024.5 250.2M1023.4 247.0L1024.5 250.2M1013.3 298.7L1012.6 296.6L1011.3 294.4L1011.0 292.2L1011.2 289.9L1011.9 287.5M1017.5 282.8L1015.3 284.0L1013.4 285.5L1011.9 287.5M1019.4 302.6L1022.0 302.0L1023.5 299.7M1019.4 302.6L1017.9 300.5L1015.7 299.5L1013.3 298.7M1017.5 282.8L1019.7 284.3L1021.9 285.8M1021.9 285.8L1021.8 288.2L1020.9 290.6L1021.5 292.9L1022.9 295.1L1022.5 297.5L1023.5 299.7M1041.1 282.2L1039.6 284.1L1037.3 284.9L1035.1 285.9L1033.5 287.6M1034.7 271.4L1032.2 272.8L1031.3 275.2L1030.3 277.5L1029.7 280.1M1033.5 287.6L1032.6 285.7L1032.2 283.5L1030.4 282.1L1029.7 280.1M1059.7 301.1L1057.9 302.1L1056.3 303.4L1054.3 304.0M1047.6 290.4L1047.5 292.4L1047.0 294.3M1047.0 294.3L1048.2 296.7L1048.2 299.4M1054.3 304.0L1052.3 302.5L1050.6 300.5L1048.2 299.4M988.8 271.0L989.0 273.3L988.5 275.6L988.1 277.9L988.6 280.3L987.8 282.5L987.4 284.8L987.2 287.1L986.6 289.4M988.8 271.0L991.2 270.3L992.6 268.3M992.6 268.3L993.1 268.4M993.1 268.4L995.4 269.8L996.8 271.8L998.7 273.5L999.7 276.0M999.7 276.0L998.1 277.9L997.8 280.3L997.8 282.7L997.1 284.9L996.7 287.3L995.1 289.2M995.1 289.2L993.2 290.3L991.2 290.5L989.1 289.5L987.1 290.3M982.1 266.9L984.2 268.3L987.4 268.2L988.8 271.0M977.5 286.0L979.9 286.5L981.2 289.9L984.0 289.2L986.6 289.4M988.8 248.6L988.5 251.0L989.2 253.1L989.5 255.3L989.9 257.5L989.9 259.8L991.3 261.7L992.6 263.8L992.7 266.0L992.6 268.3M999.9 253.6L998.3 255.4L998.1 257.9L998.1 260.4L995.7 261.9L995.4 264.3L994.9 266.7L993.1 268.4M1003.0 255.5L1003.3 257.6L1004.1 259.7L1004.9 261.7L1005.1 263.9L1005.4 266.1L1006.0 268.1L1005.9 270.3M1005.9 270.3L1005.6 272.9L1004.1 275.0M1004.1 275.0L1001.7 274.8L999.7 276.0M1000.8 299.0L1000.1 296.8L998.1 295.3L997.9 292.8L996.4 291.1L995.1 289.2M1008.0 285.2L1008.0 287.7L1006.3 289.3L1005.7 291.5L1003.4 292.8L1002.5 294.8L1001.2 296.7L1000.8 299.0M1004.1 275.0L1004.9 277.0L1005.3 279.2L1006.8 281.0L1006.2 283.6L1008.0 285.2M979.3 311.9L980.9 310.0L983.1 308.9L984.9 307.1L986.6 305.4M986.6 305.4L985.9 303.2L986.5 301.1L986.9 298.9L985.9 296.7L985.6 294.6L986.5 292.4L987.1 290.3M915.3 360.0L917.2 359.9L919.7 359.0L921.6 360.3L923.6 361.8L925.7 362.3M914.8 371.0L916.9 369.9L919.3 369.5L921.8 369.6L924.2 369.2L926.7 369.1M925.7 362.3L925.9 364.6L926.4 366.8L926.7 369.1M927.3 344.3L925.3 345.3L922.8 345.1L920.8 346.1L918.5 346.4L917.5 347.2M932.2 350.7L932.4 352.0M932.4 352.0L931.0 354.0L930.2 356.4L928.8 358.4L927.5 360.5L925.7 362.3M929.6 433.5L929.3 431.3L929.3 429.0L928.6 426.9L927.6 424.8M935.4 416.1L934.3 418.3L931.7 419.0L931.8 422.3L928.3 422.3L927.6 424.8M914.1 426.7L915.9 425.5L917.9 424.5L919.7 423.3L921.8 422.4M914.1 426.7L914.4 428.7L915.0 430.6M929.0 434.0L926.4 433.6L924.3 435.1M915.0 430.6L917.0 432.3L920.5 431.1L922.8 432.2L924.3 435.1M927.6 424.8L925.6 424.0L923.7 423.1L921.8 422.4M920.5 446.7L920.1 445.3L919.2 443.3M911.7 449.0L911.1 448.2L908.9 447.3M919.2 443.3L916.9 442.3L914.6 441.1L912.5 439.5L909.9 439.4M908.9 447.3L910.4 444.8L908.2 442.0L909.6 439.5M905.4 451.5L905.8 451.1L907.4 449.2L908.9 447.3M915.0 430.6L912.8 432.3L910.9 434.1L911.5 437.4L909.9 439.4M903.6 437.9L905.5 439.1L907.7 438.7L909.6 439.5M914.1 426.7L911.4 424.7M901.1 426.5L902.4 427.0L904.6 425.7L906.8 425.3L909.1 424.7L911.4 424.7M1021.0 496.9L1019.3 495.2L1017.2 494.1L1015.6 492.3M1021.0 496.9L1021.0 498.0M1021.0 498.0L1019.0 499.4L1017.3 500.9L1016.3 503.2L1014.6 504.8L1013.8 507.2L1013.5 507.4M1015.6 492.3L1013.4 493.3L1011.9 495.3L1009.7 496.3L1007.5 497.2L1005.3 498.2M1005.3 498.2L1007.3 499.8L1008.7 501.8L1009.8 504.1L1011.2 506.1L1011.6 507.5M1027.7 506.8L1027.3 505.6L1025.3 504.0L1024.0 501.9L1022.2 500.2L1021.0 498.0M1015.0 488.7L1015.0 490.5L1015.6 492.3M1008.4 485.6L1011.0 485.9L1012.9 487.4L1015.0 488.7M1002.5 490.4L1003.6 492.8L1004.5 495.3L1004.7 498.0M1004.7 498.0L1005.3 498.2M1008.4 485.6L1006.0 486.7L1004.6 488.9L1002.5 490.4M992.8 502.1L993.9 501.9L996.0 500.6L998.2 500.0L1000.5 499.8M1000.5 499.8L1002.8 499.3L1004.7 498.0M1002.5 490.4L1001.0 488.5L998.7 487.8L996.6 487.0M996.6 487.0L998.6 485.8L999.6 484.0L1000.6 482.2L1001.0 480.0M1008.4 485.6L1007.7 483.9L1007.3 482.2M1001.0 480.0L1003.0 481.1L1005.6 480.3L1007.3 482.2M1083.4 524.3L1082.8 522.6L1081.1 520.8L1080.0 518.7L1078.5 516.7L1077.3 514.6M1077.3 514.6L1074.6 514.9L1072.0 515.3L1069.4 515.6M1075.9 500.6L1074.7 503.2L1071.6 503.4L1069.5 504.8L1066.7 505.3L1066.2 508.7M1075.9 500.6L1074.4 499.0L1072.5 497.7L1070.7 496.3M1070.7 496.3L1068.6 497.0L1066.5 496.1L1064.5 497.3L1062.4 497.0M1062.4 497.0L1060.9 499.0L1061.1 501.2L1059.9 503.3L1061.9 505.7L1061.1 507.8M1066.2 508.7L1063.7 507.6L1061.1 507.8M1209.1 387.3L1208.3 385.0L1209.2 382.4L1209.2 380.0L1208.9 377.6L1209.1 375.1L1208.8 372.7L1208.8 370.3L1207.2 368.1L1205.7 365.9M1205.7 365.9L1203.6 364.2L1201.5 362.5M1180.3 366.4L1180.0 368.8L1180.1 371.4L1179.2 373.6L1177.8 375.6L1176.8 377.8L1174.9 379.7L1173.7 381.8L1173.8 384.4L1172.9 386.6L1172.8 389.1M1172.8 389.1L1173.0 392.0L1175.0 393.5L1176.5 395.4L1177.1 398.0L1180.0 398.9M1209.1 387.3L1211.3 388.5L1213.0 390.4L1215.1 391.7M1198.3 426.1L1200.7 425.4L1202.7 423.9L1204.2 421.7L1205.3 418.8L1208.6 419.6L1211.0 418.9L1212.6 416.8L1215.2 416.4M1198.3 426.1L1196.4 424.7L1194.4 423.3L1192.9 421.5L1191.0 420.1L1189.8 418.0L1189.2 415.4L1187.6 413.8L1185.5 412.5L1185.3 409.6L1183.0 408.5L1181.6 406.7L1179.7 405.2M1180.0 398.9L1180.5 401.0L1180.3 403.1L1179.7 405.2M1118.3 484.6L1118.4 486.9L1117.5 489.0L1116.5 491.0L1116.3 493.2L1116.0 495.4L1115.6 497.5M1132.3 476.0L1134.2 477.6L1135.3 479.6L1135.7 482.0L1137.8 483.5L1138.9 485.5L1138.5 488.1L1139.7 490.1L1139.3 492.8L1140.8 494.6L1142.4 496.3L1142.7 497.6M1115.6 497.5L1117.6 498.6L1118.8 500.6L1120.3 502.1L1122.2 503.2L1124.5 503.8L1126.0 505.4M1126.0 505.4L1128.2 504.9L1130.4 504.5L1131.0 504.5M1113.2 498.8L1112.2 501.1L1113.2 504.0L1109.8 505.4L1110.0 508.0L1109.2 510.3L1107.2 512.1L1107.6 514.8M1119.6 520.4L1120.0 518.1L1121.3 516.1L1122.3 514.0L1123.4 511.9L1124.5 509.8L1126.0 508.0L1126.0 505.4M1113.2 498.8L1110.8 498.6L1108.5 497.7L1105.9 498.8L1103.6 498.4L1101.2 498.2L1098.8 497.4M1095.9 515.4L1095.6 513.2L1094.6 511.3L1094.5 509.0L1093.3 507.2L1092.3 505.3M1098.8 497.4L1097.0 499.2L1094.5 500.4L1093.4 502.9L1092.3 505.3M1108.8 480.0L1110.4 481.4L1112.3 482.5L1113.9 483.9L1116.3 483.9L1118.3 484.6M1108.8 480.0L1106.4 480.6L1104.2 481.9L1101.8 482.3L1099.7 483.6L1097.7 485.1L1095.5 486.0M1098.8 497.4L1098.6 495.0L1098.9 492.5L1097.3 490.4L1096.6 488.2L1095.5 486.0M1077.3 514.6L1077.6 512.5L1078.3 510.4L1079.4 508.4L1080.8 506.5L1080.1 504.2L1080.3 502.0M1069.4 515.6L1068.5 513.2L1067.8 510.7L1066.2 508.7M1075.9 500.6L1077.9 501.0L1079.9 501.5M1079.9 501.5L1080.3 502.0M967.2 434.2L965.4 435.3L963.1 434.7L961.3 435.7M961.3 435.7L961.0 433.1L959.7 430.8L959.2 428.3L959.3 425.7M967.2 434.2L967.6 432.0L966.4 429.7L967.4 427.5M967.4 427.5L965.2 427.5L963.4 426.5L961.4 425.9L959.3 425.7M961.3 435.7L959.9 437.0L959.1 438.8M953.4 438.0L955.3 438.3L957.2 438.3L959.1 438.8M957.8 425.2L959.0 425.5M959.3 425.7L959.0 425.5M1031.9 449.5L1033.9 451.0L1035.2 453.1L1036.2 455.4L1038.3 456.9M1031.9 449.5L1032.4 447.3L1033.1 445.3L1034.6 443.6L1035.6 441.7M1040.2 457.1L1038.3 456.9M1045.1 449.6L1043.7 447.5L1041.8 445.8L1039.1 444.9L1038.3 442.2M1045.1 449.6L1043.8 451.5L1043.0 453.6L1041.6 455.4L1040.2 457.1M1035.6 441.7L1038.3 442.2M956.8 369.7L954.0 370.4L952.1 368.7L950.3 366.7L947.9 366.5L945.7 365.6M945.2 361.7L945.0 363.7L945.7 365.6M945.2 361.7L946.7 360.2L948.6 359.1L949.9 357.4L951.2 355.7L953.0 354.5L954.1 352.6M954.1 352.6L956.0 353.3L957.9 354.4L959.6 355.8L961.8 355.8M951.0 340.3L951.1 342.9L953.0 345.0L953.6 347.5L954.0 350.0L954.1 352.6M932.4 352.0L934.6 352.8L936.5 354.1L938.8 355.0L940.9 356.0L941.9 358.6L943.5 360.2L945.2 361.7M967.6 337.6L967.6 340.1L967.7 342.5L967.6 345.0L966.8 347.4L967.3 349.8L967.9 352.3M967.9 352.3L965.2 352.3L965.0 356.5L961.8 355.8M1298.1 478.8L1298.1 478.4L1298.6 476.1L1297.8 473.7L1298.1 471.4M1316.7 447.6L1316.7 450.6L1315.5 452.6L1313.5 453.7L1310.1 453.7L1308.9 455.6L1307.7 457.6M1322.0 462.0L1321.3 462.0L1319.1 462.1L1317.0 462.7L1314.8 463.3L1312.7 463.8M1307.7 457.6L1308.4 460.5L1311.1 461.7L1312.7 463.8M1221.3 467.8L1220.5 470.7L1221.4 472.8L1224.5 473.8L1225.6 475.9L1226.9 477.7L1227.8 479.8L1228.1 482.2M1227.9 483.7L1228.1 482.2M1159.4 471.3L1159.4 473.5L1159.4 475.8L1159.4 478.0L1159.9 480.2L1159.5 482.5L1159.3 484.8L1160.3 487.0L1160.7 489.2L1159.9 491.5L1161.6 493.7L1160.5 496.0L1161.5 497.5M1159.4 471.3L1161.6 470.5L1163.9 470.3L1165.5 468.3L1167.8 468.0M1167.8 468.0L1170.1 469.0L1172.7 469.5L1174.1 471.8L1175.9 473.4L1177.5 475.4L1180.0 476.0M1180.0 476.0L1180.1 478.3L1180.9 480.5L1180.8 482.8L1180.8 482.8M1133.9 471.8L1135.4 469.2L1137.9 469.5L1139.7 468.1L1142.4 468.7L1144.5 468.2L1146.6 467.1M1146.6 467.1L1148.4 468.9L1150.3 470.1L1152.8 469.7L1155.3 469.5L1157.4 470.3L1159.4 471.3M1133.9 471.8L1133.8 474.2L1132.3 476.0M1176.3 446.0L1175.4 448.2L1173.7 450.0L1173.3 452.4L1172.7 454.7L1171.7 456.9L1170.4 458.9L1169.6 461.1L1169.0 463.4L1169.1 465.9L1167.8 468.0M1176.3 446.0L1177.8 445.8M1193.5 470.5L1190.8 470.3L1188.3 470.7L1186.3 472.2L1184.3 473.7L1182.2 474.9L1180.0 476.0M1215.1 391.7L1216.9 391.1L1218.7 391.1M1218.7 391.1L1221.4 391.4L1223.3 392.8L1225.6 393.5L1227.4 395.2L1229.4 396.3L1231.0 398.3L1232.9 399.7L1234.9 401.0L1237.0 402.2L1239.0 403.4M1239.0 403.4L1238.7 405.9L1238.3 408.3M1215.2 416.4L1217.2 416.5L1219.4 416.4L1220.6 418.6M1238.3 408.3L1236.5 409.8L1234.6 410.9L1232.3 411.6L1230.7 413.3L1228.4 413.9L1226.4 415.1L1224.3 416.0L1222.4 417.3L1220.6 418.6M1238.3 408.3L1240.0 410.2L1240.9 412.8L1243.2 414.1L1245.0 415.9L1246.3 418.1M1224.9 423.6L1227.2 424.0L1229.5 423.9L1231.9 423.4L1234.2 423.8L1236.5 423.3L1238.8 424.1L1241.1 424.5M1241.1 424.5L1242.3 422.9L1243.5 421.1L1245.5 420.1L1246.3 418.1M1260.8 373.2L1259.9 375.4L1258.4 377.3L1257.1 379.2L1256.4 381.5L1255.3 383.6L1254.0 385.5L1253.6 387.9L1253.3 390.3L1252.5 392.5M1252.4 392.5L1250.2 391.4L1248.4 389.9L1246.3 388.8L1244.3 387.4L1243.0 385.1L1240.9 384.0L1239.3 382.2L1236.5 382.1L1234.3 381.2M1234.3 381.2L1234.3 379.0L1235.2 376.9L1235.5 374.6L1235.9 372.4L1236.2 370.2L1236.9 368.0L1236.0 365.6L1237.5 363.6L1237.2 361.3M1237.2 361.3L1239.2 361.2L1241.2 360.9M1218.7 391.1L1221.2 390.7L1223.8 390.6L1225.8 389.4L1227.3 387.5L1229.0 385.8L1230.8 384.3L1232.4 382.6L1234.3 381.2M1239.0 403.4L1240.3 401.7L1243.0 401.5L1244.5 400.0L1246.3 398.8L1247.1 396.2L1248.5 394.6L1250.0 393.0L1252.4 392.5M1205.7 365.9L1208.0 365.6L1209.6 363.5L1211.7 362.5L1213.7 361.5L1215.7 360.4L1217.7 359.5L1220.0 359.0L1222.1 358.3L1224.5 358.5L1226.6 357.5L1229.0 357.6L1231.2 357.3M1231.2 357.3L1232.4 359.8L1234.6 360.8L1237.2 361.3M1302.1 390.6L1299.7 390.0L1297.2 390.0M1299.2 411.1L1297.5 409.9L1296.3 407.9L1295.4 405.6L1293.1 405.2L1291.0 404.4L1289.0 403.5M1297.2 390.0L1295.1 390.9L1293.0 391.9L1292.1 394.0L1290.0 395.0L1289.4 397.5M1289.0 403.5L1289.4 401.5L1289.4 399.5L1289.4 397.5M1266.7 371.2L1266.7 374.2L1267.5 376.5L1268.8 378.6L1271.3 379.9L1274.0 381.0L1275.8 382.7L1276.4 385.2L1277.6 387.3M1277.6 387.3L1278.7 385.0L1280.6 383.8L1282.5 382.7L1284.5 381.7L1286.4 380.6L1288.5 379.7L1290.7 379.2M1290.7 379.2L1291.5 376.9L1291.6 376.4M1255.1 346.2L1257.4 346.7L1259.4 348.4L1261.7 348.8L1264.0 349.3L1266.4 349.2L1268.3 351.5L1270.9 350.8L1273.3 350.9L1273.3 350.9M1255.1 346.2L1253.8 348.0L1252.2 349.6L1250.4 351.0L1249.1 352.9L1247.7 354.7L1245.3 355.5L1244.4 357.7L1242.3 358.8L1241.2 360.9M1260.8 373.2L1262.8 372.7L1264.6 371.6L1266.7 371.2M1277.5 388.8L1276.0 390.8L1273.2 391.6L1272.2 394.1L1270.9 396.1M1254.5 394.4L1256.9 394.8L1259.1 395.7L1261.3 396.9L1263.8 395.6L1266.2 395.3L1268.6 395.6L1270.9 396.1M1254.5 394.4L1252.5 392.5M1277.5 388.8L1277.6 387.3M1289.4 397.5L1287.6 395.9L1285.7 394.3L1284.0 392.5L1281.6 391.6L1279.6 390.1L1277.5 388.8M1251.4 334.3L1252.4 332.2L1254.0 330.5L1255.5 328.8L1256.6 327.0M1251.4 334.3L1251.8 336.8L1253.3 338.9L1253.2 341.6L1254.2 343.9L1255.1 346.2M1251.4 334.3L1248.8 334.2L1246.3 334.2L1243.9 333.4L1241.4 332.9M1249.7 315.2L1249.2 315.7L1246.6 314.9L1244.4 315.8L1242.1 316.3L1239.6 316.1M1239.6 316.1L1239.2 318.6L1239.7 321.0L1238.2 323.6L1238.7 325.9L1240.4 328.2L1240.1 330.6L1241.4 332.9M1231.2 357.3L1230.6 355.0L1228.4 353.0L1230.1 350.4L1228.2 348.4L1229.3 345.9L1229.2 343.6M1229.2 343.6L1230.5 341.9L1231.5 339.8L1233.1 338.3L1234.5 336.7M1241.4 332.9L1239.2 334.3L1236.6 335.1L1234.5 336.7M1248.4 281.7L1247.9 281.7L1245.7 282.0L1243.4 282.4L1241.2 283.1M1236.0 276.6L1236.2 278.8L1237.9 280.3L1238.5 282.3M1241.2 283.1L1238.5 282.3M1215.8 249.6L1215.4 251.9L1215.9 254.1L1215.6 256.4L1216.3 258.6L1216.0 260.9M1223.2 260.5L1222.4 261.9M1216.0 260.9L1218.3 260.3L1220.3 261.6L1222.4 261.9M1227.5 273.2L1225.1 272.4L1223.3 270.6M1222.4 261.9L1222.7 264.1L1221.8 266.4L1222.6 268.5L1223.3 270.6M1133.9 241.6L1135.2 243.4L1136.8 244.9M1136.9 245.0L1136.9 246.7M1136.9 246.7L1136.1 249.1L1134.5 251.1L1133.8 253.5L1132.0 255.5L1131.3 257.9M1133.9 241.6L1131.4 242.3L1129.4 243.7L1127.0 244.5M1127.0 244.5L1127.2 246.9L1128.3 249.2L1127.8 251.6L1127.5 254.0M1127.5 254.0L1128.6 255.7L1129.6 257.5M1129.6 257.5L1131.3 257.9M1129.4 230.9L1127.3 231.9L1126.2 233.9L1125.0 235.7M1129.4 230.9L1131.1 232.4L1132.9 233.7M1132.9 233.7L1133.7 236.3L1133.5 239.0L1133.9 241.6M1126.8 244.3L1126.6 242.1L1126.2 239.9L1125.5 237.8L1125.0 235.7M1121.1 222.8L1121.0 224.7L1121.1 226.9L1122.6 228.9L1122.1 231.2L1122.3 233.4M1127.6 223.3L1127.9 224.2L1128.5 226.4L1128.6 228.7L1129.4 230.9M1122.3 233.4L1123.6 234.7L1125.0 235.7M1096.6 241.3L1094.7 239.8M1090.1 251.5L1090.3 254.1L1092.0 256.0M1090.1 251.5L1091.0 249.4L1091.7 247.3L1092.8 245.2L1092.8 242.9L1093.4 240.7M1093.4 240.7L1094.7 239.8M1101.3 238.9L1099.2 240.6L1096.6 241.3M1094.4 228.4L1094.4 230.7L1094.9 232.9L1094.9 235.2L1095.4 237.5L1094.7 239.8M1088.2 250.3L1090.1 251.5M1091.9 258.0L1092.0 256.0M1084.9 236.7L1086.8 238.2L1089.3 238.3L1091.1 240.1L1093.4 240.7M1069.8 305.5L1069.8 303.3L1068.6 301.5M1076.2 296.5L1074.6 299.5L1078.0 301.2L1078.8 303.6L1078.7 306.2M1069.8 305.5L1070.4 309.1L1073.8 308.8L1076.1 310.1M1076.1 310.1L1076.9 307.9L1078.7 306.2M1078.7 306.2L1081.5 306.3L1084.3 306.4M1086.6 303.2L1084.3 304.0L1084.3 306.4M1136.9 300.2L1135.0 301.8L1133.5 303.8L1131.4 305.1L1129.8 306.9M1136.9 300.2L1134.9 298.5L1133.6 296.1L1131.4 294.7L1129.7 292.7M1129.7 292.7L1128.0 294.4L1127.7 296.8L1126.5 298.7M1126.5 298.7L1126.6 301.4L1127.6 303.9L1128.3 306.4M1128.3 306.4L1129.8 306.9M1055.9 238.9L1056.6 239.7M1057.2 253.1L1058.4 250.6M1056.6 239.7L1058.2 241.7L1058.1 244.0L1057.5 246.3L1057.6 248.5L1058.4 250.6M1065.5 255.5L1064.8 253.4L1063.5 251.7L1062.2 250.0M1058.4 250.6L1060.2 249.8L1062.2 250.0M1061.8 239.0L1064.3 241.0L1063.9 244.2M1061.8 239.0L1062.0 236.6L1062.5 234.2L1064.4 232.4M1064.4 232.4L1066.4 232.0M1066.4 232.0L1066.7 234.5L1068.6 236.4L1069.1 238.9M1067.7 243.8L1068.7 241.4L1069.1 238.9M1056.6 239.7L1059.4 240.6L1061.8 239.0M1062.2 250.0L1060.8 247.5L1063.2 246.1L1063.9 244.2M1059.9 226.5L1059.9 229.6L1062.6 230.7L1064.4 232.4M1070.4 253.0L1069.6 250.7L1068.7 248.5L1068.9 245.9L1067.7 243.8M1074.3 238.5L1071.7 238.6L1069.1 238.9M1013.6 253.5L1015.7 254.2L1017.3 256.2L1019.9 255.6L1021.3 258.1L1023.9 257.3M1017.0 270.0L1018.8 269.0L1020.9 268.5L1021.5 265.8L1023.7 265.5M1023.7 265.5L1024.6 263.7L1024.8 261.7M1024.8 261.7L1024.0 259.6L1023.9 257.3M1009.7 248.2L1011.4 249.6L1011.6 252.3L1013.6 253.5M1018.7 245.8L1016.7 247.3L1015.7 249.4L1015.5 252.1L1013.6 253.5M1024.5 250.2L1024.3 252.6L1023.3 254.9L1023.9 257.3M1017.5 282.8L1017.8 280.7L1017.8 278.5L1017.7 276.4L1017.3 274.2L1016.4 272.1L1017.0 270.0M1011.9 287.5L1009.8 286.6L1008.0 285.2M1021.9 285.8L1024.2 285.0L1025.7 283.3L1027.3 281.7L1028.4 279.6M1028.4 279.6L1029.7 280.1M1033.5 260.9L1031.4 261.4L1029.2 261.8L1027.0 261.6L1024.8 261.7M1033.5 287.6L1033.4 290.0L1033.5 292.3M1025.7 300.6L1027.0 298.7L1028.5 297.0L1030.0 295.3L1032.1 294.1L1033.5 292.3M1047.0 294.3L1044.6 295.0L1042.4 296.2L1040.3 297.8L1037.6 297.5M1037.6 297.5L1035.7 296.2L1035.0 293.9L1033.5 292.3M968.5 352.5L967.9 352.3M968.5 352.5L970.7 352.3L973.0 352.8L975.1 352.4L977.1 351.7L979.1 350.7L981.3 350.6L983.1 348.9M970.1 334.9L972.1 336.0L974.3 336.8L976.2 337.9L977.9 339.7L979.7 341.1L981.9 341.8L984.2 342.3M983.1 348.9L983.7 346.8L984.0 344.6L984.2 342.3M977.7 318.1L979.7 319.3L982.3 319.7L984.0 321.4L985.7 323.0L987.4 324.5L989.4 325.8L990.7 327.9M990.7 327.9L989.6 329.9L989.5 332.1L989.2 334.3L989.0 336.5L987.6 338.3L987.0 340.4M987.0 340.4L984.2 342.3M1061.7 303.0L1061.7 305.3L1061.3 307.6L1061.8 309.8L1062.7 312.0M1066.8 314.0L1064.7 313.0L1062.7 312.0M996.4 312.1L995.8 309.9M996.4 312.1L998.8 311.7L1001.1 312.0L1003.0 313.3L1005.0 314.5L1007.2 315.0M995.8 309.9L997.2 307.9L997.5 305.4L998.2 303.1L999.0 300.8L1000.8 299.0M1000.8 299.0L1002.6 300.3L1005.0 300.5L1007.1 301.3L1008.3 303.5M1008.3 303.5L1008.6 305.8L1009.7 307.9L1009.9 310.2L1008.9 312.5M1008.9 312.5L1007.2 315.0M994.2 326.1L993.6 323.6L994.2 321.3L995.4 319.1L995.2 316.7L995.4 314.3L996.4 312.1M990.7 327.9L992.1 326.3L994.2 326.1M986.6 305.4L988.4 307.6L991.4 307.3L993.2 309.4L995.8 309.9M1002.3 329.3L1000.2 328.7L997.9 328.6L996.0 327.4L994.2 326.1M1008.0 327.5L1008.0 325.0L1008.2 322.5L1008.0 320.0L1008.1 317.5L1007.2 315.0M1002.3 329.3L1004.4 329.4L1005.9 327.5L1008.0 327.5M1013.3 298.7L1011.5 300.2L1010.3 302.2L1008.3 303.5M1019.4 302.6L1018.1 304.6L1018.5 306.8L1016.9 308.8L1016.8 310.9L1017.6 313.3M1017.6 313.3L1015.5 312.9L1013.3 312.3L1011.0 313.5L1008.9 312.5M1017.6 313.3L1019.1 315.5L1019.7 318.0L1020.8 320.4M1008.9 327.9L1008.0 327.5M942.1 374.4L941.7 371.8M942.1 374.4L940.5 376.1L939.0 377.9L938.7 380.3L936.4 381.6L935.9 383.9L935.6 386.3M934.4 386.3L935.6 386.3M934.4 386.3L932.2 385.0L931.4 382.1L929.7 380.2L927.1 379.3M927.1 379.3L927.7 377.0L928.1 374.7L926.8 372.3L927.4 369.9M945.7 365.6L944.2 367.6L942.7 369.6L941.7 371.8M956.2 380.0L953.5 380.4L952.1 382.7M952.1 382.7L950.6 381.2L949.1 379.5L947.2 378.4L945.0 377.7L943.7 375.9L942.1 374.4M956.2 380.0L955.3 377.3L956.5 374.8L957.4 372.3L956.8 369.7M939.7 390.0L941.6 388.2L944.5 389.7L946.8 388.8L948.6 386.6L951.1 386.7M952.1 382.7L951.6 384.7L951.1 386.7M939.7 390.0L938.2 387.6L935.6 386.3M926.7 369.1L927.4 369.9M917.8 384.4L916.0 382.9L913.5 382.5L912.0 381.7M917.8 384.4L920.0 384.0L922.1 383.4L923.6 381.8L925.1 380.1L927.1 379.3M948.9 417.3L948.6 415.0L949.1 412.7L949.3 410.4L949.1 408.0M935.4 416.1L934.5 413.6L933.6 411.1M936.4 404.9L936.2 407.3L934.4 409.0L933.6 411.1M936.4 404.9L937.8 404.1M937.8 404.1L940.0 405.1L942.1 406.2L944.2 407.4L946.7 407.6L949.1 408.0M917.8 384.4L918.7 386.7L919.2 389.2L919.6 391.6M907.6 397.6L909.1 396.5L912.3 397.7L913.7 395.4L915.7 394.3L917.2 392.2L919.6 391.6M934.4 386.3L932.9 387.9L930.7 388.7L928.8 389.8L927.3 391.5L925.8 393.2L924.4 394.9M919.6 391.6L921.2 392.7L923.3 393.0L924.4 394.9M937.8 404.1L938.8 402.1L940.1 400.2L940.6 398.0M939.7 390.0L939.6 392.7L939.9 395.4L940.6 398.0M936.4 404.9L934.5 403.8L933.1 402.1L931.5 400.6L929.7 399.2L928.2 397.6L926.4 396.3L924.5 395.2M924.4 394.9L924.5 395.2M911.4 414.0L913.1 412.1L914.6 410.0L914.6 407.2L916.0 405.1M925.0 411.1L922.9 413.0L921.3 415.3M925.0 411.1L923.6 409.6L922.5 407.9L921.2 406.3L919.9 404.8M919.9 404.8L918.0 405.4L916.0 405.1M911.4 424.7L911.5 422.6L911.3 420.6L910.8 418.5L913.3 416.4L911.6 414.3M921.8 422.4L921.3 420.1L921.7 417.6L921.3 415.3M907.5 398.2L909.0 399.3L910.7 400.8L912.5 402.1L914.6 403.2L916.0 405.1M933.6 411.1L931.5 411.4L929.3 411.3L927.2 411.2L925.0 411.1M924.5 395.2L924.5 397.6L922.5 398.9L921.5 400.8L920.3 402.6L919.9 404.8M995.8 487.2L994.0 485.6L992.2 484.2L990.4 482.7L988.1 481.8M983.4 491.2L983.7 489.0L984.6 486.8L984.6 484.6L984.4 482.3M983.4 491.2L985.1 492.7L986.8 494.3L988.0 496.3L989.8 497.8M984.9 481.9L984.4 482.3M989.8 497.8L990.8 497.3M1000.5 499.8L998.0 499.5L995.7 498.5L993.4 497.5L990.8 497.3M996.6 487.0L995.8 487.2M976.0 493.9L978.4 492.9L980.9 492.0L983.4 491.2M973.4 482.6L975.7 483.9L977.8 481.6L980.0 482.6L982.2 482.2L984.4 482.3M988.7 499.6L989.8 497.8M982.3 471.7L983.7 473.5L983.9 475.6L983.4 478.0L984.5 479.8L984.9 481.9M1029.3 492.2L1027.1 493.2L1025.2 494.6L1023.5 496.4L1021.0 496.9M1032.6 508.0L1032.6 506.8L1035.9 506.2L1037.0 503.9M1029.9 492.3L1031.5 494.0L1032.5 496.0L1033.7 498.0L1034.8 499.9L1036.0 501.8L1037.0 503.9M970.2 436.6L969.4 439.1L969.4 441.8L968.9 444.4M970.2 436.6L973.2 437.0L975.1 434.8L977.4 433.7M980.3 442.0L980.1 439.6L980.0 437.2L979.8 434.8M968.9 444.4L969.9 445.5M979.8 434.8L977.4 433.7M961.9 443.3L964.3 443.1L966.5 444.3L968.9 444.4M959.1 438.8L961.1 440.7L961.9 443.3M967.2 434.2L968.6 435.5L970.2 436.6M967.4 427.5L967.7 427.3M975.5 429.4L973.5 429.3L971.7 428.1L969.9 427.2L967.7 427.3M1001.0 480.0L1000.0 478.3L1000.0 476.4M1012.3 474.9L1009.9 475.2L1007.7 474.6L1005.4 474.3L1003.2 473.4M1003.2 473.4L1002.0 475.3L1000.0 476.4M988.1 481.8L989.4 479.6L990.6 477.4L994.1 477.1L994.7 474.3M1028.6 450.2L1027.0 452.0L1026.3 454.7L1023.8 455.8M1029.5 463.2L1028.4 461.1L1026.7 459.4L1025.4 457.5L1023.8 455.8M1019.5 481.8L1021.6 482.4L1023.5 481.5L1025.4 481.1M1019.5 481.8L1018.0 479.9L1016.6 477.9L1015.0 476.0L1013.0 474.6M1023.0 468.8L1021.0 467.8L1018.8 468.1M1023.0 468.8L1024.2 470.6L1024.8 472.7L1026.5 474.3L1027.5 476.2L1027.5 478.6M1018.8 468.1L1016.6 469.7L1014.2 470.8M1027.5 478.6L1025.4 481.1M1029.3 492.2L1027.8 490.2L1027.0 488.0L1026.8 485.6L1026.4 483.2L1025.4 481.1M1015.0 488.7L1016.2 487.1L1017.3 485.3L1018.8 483.8L1019.5 481.8M1012.3 474.9L1013.0 474.6M1029.4 463.5L1028.0 465.1L1026.4 466.4L1023.9 466.7L1023.0 468.8M1036.1 471.4L1035.2 468.8L1033.8 466.6L1032.4 464.4L1029.4 463.5M1032.1 477.5L1029.8 478.0L1027.5 478.6M1007.2 463.8L1008.5 465.9L1011.0 467.0L1012.6 468.9L1014.2 470.8M1007.2 463.8L1006.5 465.9L1004.1 466.6L1003.1 468.5M1003.1 468.5L1002.4 471.0L1003.2 473.4M1039.3 484.2L1037.3 482.7L1035.0 481.6L1033.1 480.1L1032.1 477.5M1039.3 484.2L1038.6 486.0L1039.3 487.9M1029.9 492.3L1031.9 491.5L1033.7 490.5L1035.6 489.8L1037.4 488.6L1039.3 487.9M964.9 457.1L962.8 458.3L960.5 458.7L958.3 459.7L955.9 460.0M964.9 457.1L965.0 456.3M952.8 455.8L954.0 454.2L954.3 452.2L954.9 450.3M952.8 455.8L954.1 458.1L955.9 460.0M954.9 464.6L956.5 462.5L955.9 460.0M967.4 464.5L967.9 461.6L965.7 459.6L964.9 457.1M970.6 451.2L968.9 453.0L966.2 453.9L965.0 456.3M970.6 451.2L972.7 451.5L974.6 452.3L976.2 453.6M969.1 465.6L970.7 463.3L973.4 463.2L976.3 463.4L977.9 461.1M977.9 461.1L977.4 458.6L977.5 455.9L976.2 453.6M970.6 451.2L970.1 449.3L970.7 447.3L969.9 445.5M947.0 456.6L947.8 455.9L950.3 455.9L952.8 455.8M950.3 446.6L952.2 447.3L953.2 449.2L954.9 450.3M1061.1 507.8L1060.6 508.0M1058.0 513.8L1058.8 512.2L1060.1 510.3L1060.6 508.0M1095.5 486.0L1092.9 484.6M1084.0 488.5L1086.1 487.4L1088.1 485.9L1090.4 484.9L1092.9 484.6M1167.7 352.4L1165.2 351.8L1162.9 352.2L1160.7 352.9L1158.4 353.6L1156.1 354.3L1153.9 354.9M1172.8 389.1L1170.5 389.1L1168.0 390.6L1165.9 389.8L1163.9 388.3L1161.8 387.1M1146.6 467.1L1145.5 464.7L1145.2 462.4L1146.1 460.2L1146.6 458.0L1147.3 455.8L1146.9 453.4L1148.4 451.3L1149.1 449.1L1149.3 446.8L1148.8 444.5M1148.8 444.5L1149.6 441.7L1151.3 439.9L1153.0 438.1L1155.9 437.7L1158.0 436.4L1159.9 434.9M1198.3 426.1L1197.9 428.4L1197.4 430.8M1159.9 434.9L1159.4 432.6L1159.1 430.3L1159.8 427.8L1158.7 425.7L1157.9 423.5M1108.8 480.0L1107.1 478.3L1107.1 475.9L1105.2 474.3L1104.4 472.2L1103.7 470.1L1102.7 468.1L1103.7 465.5L1103.0 463.4M1089.3 471.4L1091.1 470.0L1092.8 468.4L1094.5 466.8L1096.8 466.3L1098.8 465.2L1101.1 464.7L1103.0 463.4M1148.8 444.5L1146.8 442.9L1144.4 443.4L1142.0 443.3L1140.0 441.5L1137.8 441.1L1135.5 440.7L1132.9 442.5L1130.8 441.3L1128.3 442.0L1126.3 440.5M1133.9 471.8L1133.3 469.4L1131.5 467.9L1130.7 465.7L1128.7 464.4L1126.3 463.4L1124.4 462.0L1122.5 460.7L1122.2 458.0L1121.0 456.1M1103.0 463.4L1104.5 460.9L1105.3 458.2M1121.0 456.1L1118.8 456.8L1116.5 456.0L1114.4 457.2L1112.1 457.2L1109.9 457.4L1107.8 458.6L1105.5 458.0M988.5 455.5L989.6 453.0L989.2 450.5L990.1 447.9L988.9 445.3M979.4 451.8L980.6 450.1L981.5 448.3L982.1 446.4L982.4 444.3M988.9 445.3L986.8 444.3L984.7 443.9L982.4 444.3M980.3 442.0L982.4 444.3M976.2 453.6L977.8 452.7L979.4 451.8M986.6 431.4L988.2 432.9L990.1 434.1L991.8 435.6M986.6 431.4L984.1 432.0L981.7 432.8L979.8 434.8M991.4 443.9L988.9 445.3M994.8 459.1L993.0 458.2L990.9 457.8L989.1 456.9M989.1 456.9L987.3 458.5L985.7 460.2L983.6 461.4L981.6 462.7M992.9 468.9L994.2 466.6M992.9 468.9L990.6 469.6L988.2 468.3L985.9 469.5L983.6 469.5M983.6 469.5L982.7 467.3L981.9 465.1L981.6 462.7M977.9 461.1L979.4 462.6L981.6 462.7M988.5 455.5L989.1 456.9M1003.1 468.5L1000.9 468.0L998.6 468.0L996.5 466.7L994.2 466.6M994.7 474.3L994.3 471.4L992.9 468.9M982.3 471.7L983.6 469.5M959.0 425.5L960.2 423.2L962.2 421.7L963.2 419.3L964.8 417.4L966.5 415.6M971.4 418.5L968.6 417.7L966.5 415.6M953.6 418.7L954.8 416.4L957.4 415.5L959.0 413.6L960.5 411.7M960.5 411.7L962.8 412.7L965.2 413.4M966.5 415.6L965.2 413.4M991.4 443.9L993.7 444.2L996.1 444.3L998.0 446.2M994.8 459.1L996.5 458.6L997.9 457.5M998.0 446.2L997.9 448.4L998.4 450.7L997.9 452.9L997.4 455.2L997.9 457.5M1007.1 463.5L1004.3 462.6L1002.9 460.3L1001.5 458.0M1001.5 458.0L999.9 456.5L997.9 457.5M1007.1 463.5L1008.7 461.8L1010.7 460.8L1012.5 459.4L1014.1 457.9M1001.5 458.0L1004.4 457.5L1005.7 455.3L1006.0 452.1L1008.5 451.2M1008.5 451.2L1009.3 453.4L1010.8 455.0L1014.5 454.7L1014.1 457.9M1018.8 468.1L1017.5 465.7L1017.3 463.2L1017.4 460.6L1017.5 458.0M1014.1 457.9L1017.5 458.0M1029.4 463.5L1029.5 463.2M1023.8 455.8L1022.0 456.8L1020.2 455.8M1017.5 458.0L1018.9 456.9L1020.2 455.8M986.6 431.4L986.4 429.0L986.0 426.6L987.6 424.4M987.6 424.4L990.1 423.4L992.8 422.8M992.8 422.8L994.8 424.3L997.2 424.8L999.7 425.4M991.8 435.6L994.3 435.0L996.7 433.9L999.2 433.2M999.7 425.4L1000.0 428.0L999.3 430.6L999.2 433.2M1034.4 439.6L1034.7 437.2M1034.4 439.6L1035.6 441.7M1049.9 436.1L1048.9 434.3L1048.1 432.4L1046.6 430.9M1046.6 430.9L1044.3 430.2L1041.9 430.0M1034.7 437.2L1036.9 435.8L1038.0 433.3L1039.5 431.1L1041.9 430.0M1241.9 494.1L1242.6 493.5L1244.0 491.7L1245.3 489.8L1247.1 488.4M1228.1 482.2L1230.3 481.1L1232.7 480.5L1235.2 480.3L1237.5 479.3L1239.9 478.7M1239.9 478.7L1241.6 480.4L1242.9 482.5L1244.1 484.6L1246.2 486.1L1247.1 488.4M1268.0 482.2L1267.4 481.9L1265.1 481.9L1262.8 482.1L1260.5 482.7L1258.2 482.1M1258.2 482.1L1257.6 484.8L1255.1 486.3L1253.7 488.6M1253.7 488.6L1251.5 488.7L1249.3 489.0L1247.1 488.4M1254.5 394.4L1254.1 396.7L1253.9 398.9L1252.6 401.4L1255.4 403.0L1254.9 405.3L1255.6 407.4L1256.7 409.4L1257.9 411.3M1246.3 418.1L1248.9 416.6L1251.7 417.9M1257.9 411.3L1256.9 413.5L1255.3 415.1L1253.7 416.7L1251.7 417.9M1241.1 424.5L1241.2 426.7L1242.4 428.5L1243.1 430.5L1243.0 432.7L1243.2 434.8M1255.3 433.9L1256.6 432.2L1256.7 430.1L1257.3 428.1M1246.2 296.7L1244.8 297.6L1242.9 298.7L1240.6 298.8L1239.0 300.4M1239.6 316.1L1238.3 314.3L1236.3 313.3M1236.3 313.3L1236.2 311.1L1237.6 309.1L1237.9 306.9L1238.3 304.7L1238.8 302.6L1239.0 300.4M1238.5 282.3L1238.0 284.8L1236.5 286.8L1235.2 289.0L1234.5 291.4L1234.4 294.0M1239.0 300.4L1237.8 297.9L1235.9 296.1L1234.4 294.0M1227.1 288.5L1226.2 285.6L1228.2 283.4L1229.3 281.1L1229.8 278.5M1227.1 288.5L1227.8 290.7L1228.0 293.1M1228.0 293.1L1230.1 293.5L1232.3 293.2L1234.4 294.0M1203.0 311.8L1201.9 309.9L1199.6 308.7L1199.3 306.2M1199.3 306.2L1197.3 307.0L1195.6 308.4L1193.5 308.8L1191.4 309.3L1189.3 309.8L1187.3 310.4M1185.2 319.5L1184.9 317.1L1187.2 315.2L1187.9 313.0L1187.3 310.4M1212.9 246.3L1210.7 247.6L1209.9 250.1L1208.8 252.4L1206.8 253.9M1204.7 253.5L1206.8 253.9M1206.8 253.9L1208.1 256.1L1209.2 258.3L1209.9 260.8L1210.8 263.1L1212.6 265.0M1196.4 256.0L1195.8 258.2L1194.9 260.3L1194.4 262.5L1193.6 264.6M1196.4 256.0L1195.4 253.2M1195.4 253.2L1193.5 252.5L1192.0 251.3L1190.4 250.2M1187.2 260.4L1186.7 257.9L1186.6 255.3L1187.5 252.8M1187.2 260.4L1188.0 262.5L1188.8 264.5L1190.6 266.0M1190.4 250.2L1188.6 251.1L1187.5 252.8M1190.6 266.0L1193.6 264.6M1202.5 256.5L1203.7 255.1L1204.7 253.5M1202.5 256.5L1200.5 255.7L1198.5 255.6L1196.4 256.0M1192.3 242.8L1192.1 243.4L1191.2 245.6L1190.8 247.9L1190.4 250.2M1184.9 241.5L1185.1 242.3L1183.8 244.6L1183.2 246.9L1183.9 249.1M1183.9 249.1L1185.9 250.8L1187.5 252.8M1129.6 257.5L1128.5 259.6L1128.0 261.9L1127.5 264.2L1126.4 266.2L1124.7 268.0M1131.3 257.9L1132.7 260.0L1133.5 262.3L1134.6 264.5M1128.3 272.5L1126.7 271.3L1126.3 269.2L1124.7 268.0M1128.3 272.5L1130.2 270.9L1132.7 270.2L1134.2 268.2M1134.2 268.2L1134.2 266.3L1134.6 264.5M1136.9 246.7L1138.8 248.4L1138.4 251.2L1140.0 253.0L1140.8 255.3L1140.4 258.0L1142.9 259.5M1134.6 264.5L1136.6 263.1L1138.4 261.4L1140.7 260.5L1142.9 259.5M1148.3 287.4L1150.2 285.9L1152.4 284.7L1154.5 283.5M1148.3 287.4L1148.7 289.7L1147.0 292.2L1149.9 294.2L1148.6 296.6L1149.8 298.8L1151.8 300.9L1150.0 303.4M1157.8 302.3L1156.9 299.9L1156.0 297.5L1156.3 295.1L1156.4 292.7L1156.9 290.3L1157.9 287.9M1157.8 302.3L1155.8 303.6L1153.5 304.0L1151.2 304.6M1157.9 287.9L1156.7 285.3L1154.5 283.5M1151.2 304.6L1150.0 303.4M1128.9 283.9L1126.5 284.2L1124.1 284.3M1128.9 283.9L1127.6 281.7L1127.4 279.4L1128.2 277.1L1127.7 274.8L1128.3 272.5M1122.3 268.0L1122.2 270.4L1121.9 272.7L1121.7 275.0L1120.2 277.1M1104.9 277.1L1105.9 275.1L1107.2 273.4L1108.9 271.9M1101.5 276.2L1103.1 277.0L1104.9 277.1M1097.1 268.5L1097.8 266.4L1099.0 264.7L1100.6 263.1L1100.5 260.6L1102.4 259.2M1101.5 276.2L1101.0 273.9L1099.3 272.3L1099.2 269.8L1097.1 268.5M1108.9 271.9L1110.0 269.7L1109.8 267.7L1106.8 266.1L1107.6 263.9M1107.6 263.9L1106.5 261.6L1104.6 260.3L1102.4 259.2M1104.1 241.0L1104.8 243.0L1104.5 245.2L1104.9 247.3L1104.6 249.4M1104.6 249.4L1102.8 251.5L1102.0 254.1M1102.4 259.2L1101.6 256.7L1102.0 254.1M1101.5 276.2L1100.5 278.2L1100.0 280.4L1099.3 282.6L1097.7 284.4L1096.7 286.4M1104.9 277.1L1103.9 279.7L1105.1 281.9L1107.1 284.0L1106.7 286.5L1106.8 289.0M1103.0 293.7L1101.2 292.1L1099.5 290.3L1098.4 288.1L1096.7 286.4M1086.9 289.6L1088.9 289.6L1090.9 289.4L1092.9 289.6M1086.6 303.2L1087.9 303.3M1087.9 303.3L1090.0 301.9L1091.9 300.4L1093.8 298.7M1093.8 298.7L1095.1 296.3L1094.3 294.0L1093.6 291.8L1092.9 289.6M1091.2 275.3L1092.2 277.5L1092.8 279.8L1092.6 282.3L1094.9 284.2L1094.4 286.8M1092.9 289.6L1094.4 286.8M1163.5 308.4L1166.0 308.0L1168.3 309.3L1170.6 310.3L1173.1 309.4M1163.5 308.4L1162.9 310.6L1164.2 313.2L1161.4 315.0L1162.5 317.6L1160.9 319.6L1161.6 322.0L1160.9 324.3M1173.1 309.4L1173.8 311.6L1173.7 314.0L1173.3 316.5L1174.6 318.5L1175.2 320.8L1176.2 322.9M1160.9 324.3L1162.9 325.5L1164.9 326.8L1167.5 327.2L1169.0 329.1L1170.7 330.9M1170.7 330.9L1171.0 328.2L1173.8 327.1L1174.8 324.9L1176.2 322.9M1162.1 304.9L1160.3 303.1L1157.8 302.3M1162.1 304.9L1161.9 307.0L1163.5 308.4M1183.6 302.8L1181.1 304.2L1178.3 303.6L1175.7 303.6M1185.2 319.5L1182.7 319.7L1180.6 321.1L1178.5 322.0L1176.2 322.9M1175.7 303.6L1174.7 305.4L1173.5 307.2L1173.1 309.4M1200.4 337.9L1199.8 339.0M1172.8 341.5L1172.8 339.3L1171.5 337.3L1171.9 335.1L1171.1 333.0L1170.7 330.9M1150.7 325.1L1149.2 323.1L1147.9 321.0L1146.5 319.0L1144.3 317.6L1142.9 315.6L1141.4 313.6L1140.0 311.5M1150.7 325.1L1149.5 326.8L1148.6 328.9L1146.9 330.3M1146.9 330.3L1144.7 329.8L1142.3 329.8L1140.2 329.0L1138.4 327.2L1136.3 326.3L1134.3 325.1L1131.9 325.2M1140.0 311.5L1137.6 312.4L1135.6 314.0L1134.0 316.0M1134.0 316.0L1133.9 318.4L1133.2 320.7L1132.8 323.0L1131.9 325.2M1141.2 304.5L1140.8 306.8L1139.8 309.1L1140.0 311.5M1141.2 304.5L1143.4 303.8L1145.5 303.5L1147.9 304.6L1150.0 303.4M1146.4 350.5L1145.6 348.2L1145.3 346.0L1146.3 343.8L1147.3 341.6L1148.5 339.3L1149.8 337.1L1146.6 334.8L1147.6 332.6L1146.9 330.3M1153.9 354.9L1151.9 354.1L1150.2 352.7L1148.6 351.1L1146.4 350.5M1138.3 300.0L1140.1 302.0L1141.2 304.5M1138.3 300.0L1136.9 300.2M1129.8 306.9L1130.7 309.3L1131.9 311.5L1131.4 314.4L1134.0 316.0M987.0 340.4L989.1 341.3L991.2 342.4L993.4 343.0L995.3 344.4L997.6 344.9L999.9 345.4M1001.2 344.8L999.9 345.4M968.5 352.5L969.8 354.6L971.2 356.7L972.8 358.6L974.4 360.4L975.9 362.4M966.3 368.5L968.6 367.8L971.0 367.3L972.6 365.7L974.1 363.7L975.9 362.4M956.2 380.0L958.2 380.9L960.3 381.4L962.5 381.6L964.5 382.8L966.7 382.7M966.7 382.7L967.5 380.6L969.8 379.6L970.8 377.6M966.3 368.5L967.6 370.7L968.9 372.9L970.1 375.1L970.8 377.6M1072.1 333.2L1069.6 333.0L1067.6 331.5M1072.1 333.2L1073.2 330.6L1075.5 328.9M1075.5 328.9L1076.1 326.3L1074.3 324.5L1073.1 322.6L1072.3 320.5L1071.6 318.3M1066.8 321.5L1068.5 320.2L1069.2 318.2M1071.6 318.3L1069.2 318.2M1075.6 314.9L1074.2 317.3L1071.6 318.3M1076.1 310.1L1075.6 312.5L1075.6 314.9M1066.8 314.0L1068.2 315.9L1069.2 318.2M1055.9 470.7L1053.5 469.4L1050.9 471.5L1048.6 468.8L1046.1 468.7L1043.5 470.0M1055.9 470.7L1055.8 468.0L1057.1 465.6L1057.0 462.9M1053.0 459.2L1054.3 461.8L1057.0 462.9M1053.0 459.2L1050.4 458.7L1048.2 460.0L1045.8 460.4L1043.6 461.4M1043.6 461.4L1045.3 463.6L1043.7 465.6L1044.4 467.7L1043.3 469.7M1043.3 469.7L1043.5 470.0M1036.1 471.4L1038.4 470.7L1041.1 471.1L1043.3 469.7M1040.2 457.1L1041.9 459.3L1043.6 461.4M1039.3 484.2L1041.6 483.0L1043.0 480.7L1045.0 479.2M1045.0 479.2L1045.3 476.8L1045.0 474.5L1044.2 472.2L1043.5 470.0M1058.6 495.5L1056.2 495.4L1054.6 494.0L1053.2 492.3L1050.9 492.0L1049.6 490.2M1058.6 495.5L1057.1 496.9L1055.9 498.8L1053.9 499.7L1052.5 501.3L1051.0 502.8M1044.2 501.2L1045.7 502.5L1047.5 503.3M1044.9 492.7L1047.1 491.1L1049.6 490.2M1047.5 503.3L1049.3 503.0L1051.0 502.8M1062.4 497.0L1059.6 495.3M1060.6 508.0L1058.4 507.4L1056.7 506.0L1054.9 504.8L1052.9 503.9L1051.0 502.8M1059.6 495.3L1058.6 495.5M1039.3 487.9L1041.2 489.5L1042.6 491.6L1044.9 492.7M1037.0 503.9L1039.4 503.0L1042.3 503.4L1044.2 501.2M1049.0 511.9L1048.1 510.3L1048.3 507.9L1047.8 505.6L1047.5 503.3M1066.0 475.2L1066.4 478.0L1063.8 479.7L1063.5 482.2L1062.5 484.5M1056.7 471.9L1055.3 473.7L1055.0 476.1L1054.4 478.2L1053.8 480.5L1051.9 482.0M1062.5 484.5L1060.9 485.5M1060.9 485.5L1058.9 484.9L1056.5 485.7L1055.0 482.5L1052.6 483.6M1051.9 482.0L1052.6 483.6M1045.0 479.2L1047.2 480.5L1049.9 480.4L1051.9 482.0M1055.9 470.7L1056.7 471.9M1070.4 489.5L1069.1 487.2L1067.0 486.1L1065.0 484.9L1062.5 484.5M1070.7 496.3L1070.6 494.1L1070.0 491.8L1070.4 489.5M1059.6 495.3L1059.6 492.8L1060.7 490.5L1061.0 488.0L1060.9 485.5M1049.6 490.2L1050.6 488.0L1051.0 485.6L1052.6 483.6M1076.1 483.1L1075.3 480.6L1073.3 479.8L1071.3 478.9L1068.8 478.6L1068.3 475.8L1066.1 475.2M1076.1 483.1L1076.6 483.0M1076.6 483.0L1077.2 480.9L1078.7 479.2L1079.5 477.2L1079.8 474.8L1081.2 473.1L1082.2 471.1L1084.1 469.7M1070.4 469.5L1069.4 471.7L1067.3 473.1L1066.1 475.2M1070.4 469.5L1072.9 470.0L1075.1 468.7L1077.6 469.4L1079.9 468.1L1082.3 468.0M1082.3 468.0L1084.1 469.7M1070.4 489.5L1073.0 488.9L1073.1 486.2L1073.6 483.7L1076.1 483.1M1084.0 488.5L1082.9 486.1L1080.7 485.2L1078.7 484.0L1076.6 483.0M1089.3 471.4L1086.6 470.8L1084.1 469.7M1061.6 461.0L1059.2 461.7L1057.0 462.9M1067.4 462.7L1065.5 461.9L1063.5 461.6L1061.6 461.0M1161.8 387.1L1160.4 388.9L1158.7 390.3L1156.5 391.2L1154.8 392.6L1153.1 393.9L1151.6 395.6L1149.5 396.6L1148.0 398.2L1146.5 399.9M1157.9 423.5L1155.6 423.0L1154.8 420.1L1152.2 420.0L1150.7 418.2L1148.4 417.8M1146.5 399.9L1145.8 402.2L1146.1 404.5L1147.4 406.6L1149.1 408.7L1148.5 411.0L1148.5 413.2L1148.2 415.5L1148.4 417.8M1129.0 421.1L1131.2 420.7L1133.5 421.4L1135.4 419.6L1137.7 419.8L1139.7 418.8L1141.8 418.1L1143.8 416.8L1146.2 418.0L1148.4 417.8M1126.3 440.5L1126.4 438.1L1126.0 436.0L1124.6 434.1L1122.9 432.4L1122.8 430.1M1129.0 421.1L1127.9 423.6L1125.1 424.5L1123.6 426.6M1105.5 458.0L1105.8 455.7L1105.4 453.5L1105.0 451.3L1105.5 448.9L1103.8 447.0L1102.1 445.1L1102.1 442.8L1101.5 440.7L1100.6 438.6L1100.7 436.3M1122.8 430.1L1120.6 430.7L1118.5 431.8L1116.3 432.5L1114.2 433.4L1111.5 432.2L1109.4 433.3L1107.2 434.1L1105.1 434.9L1102.9 435.7L1100.7 436.3M1105.3 458.2L1103.1 456.9L1100.7 456.4L1098.4 455.8L1095.7 456.1L1093.3 455.5L1091.2 454.1L1089.2 452.5M1082.3 468.0L1081.2 465.5L1082.6 462.8L1081.6 460.3M1089.2 452.5L1088.0 454.3L1086.6 456.0L1084.4 457.0L1083.0 458.6L1081.6 460.3M1067.4 462.7L1068.0 460.6L1069.6 459.1L1071.0 457.4L1071.7 455.4L1073.2 453.8M1081.6 460.3L1080.0 458.8L1077.9 458.0L1076.8 456.0L1074.8 455.2L1073.2 453.8M977.9 420.7L975.5 418.3M977.9 420.7L980.0 422.7L982.6 421.7L985.0 422.0M977.7 412.1L980.0 411.8L982.3 410.7L984.7 410.9L987.1 411.2M985.0 422.0L985.2 419.8L986.0 417.7L986.8 415.6L986.8 413.3L987.1 411.2M975.5 429.4L975.2 427.0L976.6 425.0L976.5 422.6L977.9 420.7M971.4 418.5L973.4 418.1L975.5 418.3M987.6 424.4L986.1 423.5L985.0 422.0M989.9 408.6L988.9 410.2L987.1 411.2M1028.6 450.2L1027.0 448.4L1025.5 446.5L1024.2 444.3L1021.9 443.2M1034.4 439.6L1031.9 440.9L1029.6 439.5L1027.2 439.2L1024.8 438.9M1024.8 438.9L1022.8 440.7L1021.9 443.2M1020.2 455.8L1019.6 453.5L1018.8 451.4L1018.4 449.1L1017.5 447.0L1016.2 445.0M1021.9 443.2L1020.1 444.0L1018.2 444.7L1016.2 445.0M1281.5 478.7L1282.1 477.4L1281.9 475.1L1282.9 472.8L1284.0 470.6M1270.1 479.2L1269.8 477.9L1270.3 475.5L1270.1 473.0L1270.5 470.5M1284.0 470.6L1281.9 470.5L1279.9 470.0L1277.9 469.5L1275.5 470.2L1274.0 467.9M1270.5 470.5L1272.6 469.7L1274.0 467.9M1307.7 457.6L1305.9 456.3L1303.9 455.4L1301.6 456.6M1298.1 471.4L1297.8 471.2M1301.6 456.6L1302.1 459.0L1300.9 460.9L1299.8 462.8L1300.1 465.1L1299.6 467.2L1298.9 469.2L1297.8 471.2M1284.0 470.6L1286.5 468.8M1288.2 423.3L1287.1 425.4L1285.4 426.9L1283.5 428.3L1282.2 430.2L1280.9 432.1M1298.0 432.1L1297.0 434.4L1295.1 436.1L1293.7 438.1L1292.9 440.5M1280.9 432.1L1282.5 433.8L1283.4 435.7L1282.7 438.1M1282.7 438.1L1284.6 439.2L1286.8 439.0L1288.4 441.3L1290.9 439.9L1292.9 440.5M1270.5 424.8L1269.7 422.6L1268.0 420.9L1267.1 418.7L1265.7 416.8L1264.4 414.8L1263.5 412.7M1270.5 424.8L1272.2 423.6L1273.7 422.1L1275.6 421.1L1277.9 420.5L1278.3 417.7L1279.9 416.4M1263.5 412.7L1266.1 413.0L1267.6 411.1L1269.5 409.9L1271.0 408.1L1272.7 406.6L1275.1 406.4M1279.9 416.4L1278.3 413.9L1281.3 410.9L1279.0 408.5M1279.0 408.5L1276.8 408.0L1275.1 406.4M1257.9 411.3L1259.4 413.0L1261.4 412.9L1263.5 412.7M1257.3 428.1L1259.4 427.7L1261.8 428.4L1263.9 427.7L1266.0 426.7L1268.4 427.3L1270.3 425.6M1270.3 425.6L1270.5 424.8M1271.1 427.1L1270.3 425.6M1288.0 421.9L1285.7 420.9L1283.6 419.7L1281.5 418.4L1279.9 416.4M1280.9 432.1L1278.6 431.7L1276.9 430.3L1274.4 430.4L1272.6 429.0L1271.1 427.1M1289.0 403.5L1287.1 404.6L1285.1 405.7L1283.5 407.5L1281.3 408.1L1279.0 408.5M1234.5 336.7L1233.8 334.5L1233.1 332.3L1232.5 330.1L1231.1 328.1L1230.7 325.8L1230.5 323.4L1228.7 321.6L1228.5 319.2L1228.0 316.9M1236.3 313.3L1234.4 314.1L1232.3 314.0L1230.3 314.5L1228.3 314.9M1228.0 316.9L1228.3 314.9M1229.2 343.6L1227.0 342.6L1224.6 342.1L1222.5 341.1L1221.5 338.5L1219.4 337.5L1217.7 336.0L1215.9 334.6M1200.4 337.9L1202.8 337.3L1205.1 336.4L1207.6 336.5L1210.0 335.6L1212.3 334.9L1214.7 334.4M1214.7 334.4L1215.9 334.6M1180.0 263.7L1179.1 261.3L1178.9 258.7L1178.5 256.2L1177.3 253.9M1180.0 263.7L1179.4 266.3L1179.2 269.0M1179.2 269.0L1177.1 269.6L1174.8 268.3L1172.8 269.5L1170.7 270.2M1171.1 256.2L1172.5 254.7L1174.2 253.7L1175.8 252.5M1175.8 252.5L1177.3 253.9M1183.9 249.1L1182.3 250.4L1180.3 251.1L1179.1 253.0L1177.3 253.9M1187.2 260.4L1185.0 261.9L1182.5 262.7L1180.0 263.7M1167.5 242.9L1167.7 244.4L1166.5 246.6L1165.8 248.8L1166.1 251.1L1165.4 253.4M1174.6 241.6L1175.3 243.5L1177.6 245.5L1176.9 247.9L1175.2 250.3L1175.8 252.5M1165.4 253.4L1167.7 253.6L1170.1 253.4L1171.1 256.2M1175.7 303.6L1174.5 301.7L1174.2 299.6L1172.6 297.9L1173.1 295.4L1171.9 293.6M1168.3 293.3L1170.1 293.3L1171.9 293.6M1157.9 287.9L1160.1 286.8L1162.3 286.4L1164.7 286.8M1168.3 293.3L1166.9 291.2L1165.7 289.1L1164.7 286.8M1181.3 274.7L1181.0 274.5M1181.3 274.7L1182.0 277.0L1182.2 279.4L1183.0 281.6L1183.6 283.9L1183.9 286.3L1184.7 288.5L1185.2 290.8M1181.0 274.5L1179.7 276.3L1178.9 278.5L1176.5 279.6L1175.6 281.8L1174.7 283.9M1185.2 290.8L1182.9 291.4L1180.9 290.6L1178.8 289.9L1176.7 289.7L1174.7 288.6M1174.7 288.6L1172.8 286.3L1174.7 283.9M1179.2 269.0L1178.9 271.1L1179.8 272.9L1181.0 274.5M1189.0 272.6L1186.5 273.4L1184.0 274.5L1181.3 274.7M1168.7 273.1L1168.9 275.8L1171.7 277.1L1172.6 279.4L1173.5 281.7L1174.7 283.9M1170.7 270.2L1169.8 271.7L1168.7 273.1M1171.9 293.6L1173.1 291.0L1174.7 288.6M1185.7 291.4L1186.7 294.0L1184.8 296.0L1186.0 298.5L1185.1 300.7L1183.6 302.8M1185.7 291.4L1185.2 290.8M1166.8 273.7L1168.7 273.1M1164.7 286.8L1165.0 284.6L1165.4 282.4L1165.7 280.2L1165.9 278.0L1166.5 275.9L1166.8 273.7M1185.7 291.4L1187.1 290.8M1189.0 272.6L1189.5 275.2L1190.7 277.6M1187.1 290.8L1188.6 288.8L1188.6 286.5L1189.7 284.4L1188.9 281.9L1190.1 279.8L1190.7 277.6M1136.8 244.9L1138.7 243.1L1139.0 240.7L1140.0 238.6L1139.4 236.0L1138.8 233.4L1140.4 231.5L1140.6 230.8M1136.9 245.0L1138.9 244.2L1141.1 244.0L1143.1 243.1L1145.2 242.8M1145.2 242.8L1145.7 240.5L1145.5 238.3L1146.3 236.0L1145.6 233.9L1145.9 232.4M1132.9 233.7L1133.9 231.6L1134.7 229.3L1134.8 229.0M1145.2 242.8L1147.9 243.6L1148.5 246.4M1142.9 259.5L1145.0 260.6M1154.0 233.5L1153.9 234.1L1153.0 236.3L1152.3 238.5L1151.9 240.8L1151.4 243.1L1150.3 245.1M1148.5 246.4L1150.3 245.1M1150.3 245.1L1152.1 246.1L1154.0 246.9L1155.7 248.0L1156.9 249.8M1134.8 283.6L1135.2 281.5L1135.9 279.5L1136.7 277.6L1137.0 275.5M1137.0 275.5L1139.3 275.0L1141.5 274.4L1143.7 273.8M1143.7 273.8L1144.5 275.8L1143.7 278.1L1143.9 280.3L1144.7 282.3L1144.7 284.4L1146.3 286.3M1129.9 285.0L1129.4 287.5L1129.2 290.1L1129.7 292.7M1129.9 285.0L1132.6 285.4L1134.8 283.6M1129.9 285.0L1128.9 283.9M1134.2 268.2L1135.4 270.6L1136.0 273.1L1137.0 275.5M1145.0 260.6L1145.8 262.4L1146.5 264.3M1146.5 264.3L1146.5 266.8L1145.4 269.1L1144.5 271.4L1143.7 273.8M1148.3 287.4L1146.3 286.3M1106.8 289.0L1109.3 290.4L1112.2 290.7M1108.9 271.9L1111.4 272.7M1111.4 272.7L1112.8 274.7L1113.0 277.4L1115.0 279.1M1115.0 279.1L1115.4 281.7L1114.5 284.1L1113.2 286.5L1113.9 289.1M1112.2 290.7L1113.9 289.1M1115.0 279.1L1117.7 278.2L1120.2 277.1M1124.1 284.3L1122.7 286.0L1122.2 288.0L1121.1 289.8L1120.3 291.7M1113.9 289.1L1116.4 289.1L1118.1 291.0L1120.3 291.7M1126.5 298.7L1123.4 298.8L1121.5 296.4M1121.5 296.4L1121.1 294.0L1120.3 291.7M1112.1 255.5L1111.6 253.4L1111.6 251.3M1112.5 248.8L1114.4 247.3L1116.7 247.0L1118.9 246.2M1112.5 248.8L1111.6 251.3M1118.9 246.2L1119.6 247.0M1119.6 247.0L1120.6 249.2L1120.6 251.6L1121.0 253.9L1120.7 256.3M1120.7 256.3L1120.9 258.5L1119.4 260.2L1118.8 262.2M1107.6 263.9L1109.6 262.3L1110.8 260.2L1110.7 257.5L1112.1 255.5M1104.6 249.4L1107.0 249.8L1109.2 250.7L1111.6 251.3M1111.3 240.2L1110.8 242.4L1112.0 244.5L1112.1 246.7L1112.5 248.8M1126.8 244.3L1124.5 245.6L1122.3 247.1L1119.6 247.0M1127.5 254.0L1125.1 254.5L1123.0 255.8L1120.7 256.3M1122.3 268.0L1121.5 265.9L1120.3 264.0L1118.8 262.2M1084.3 306.4L1084.8 308.8L1084.5 311.2L1084.1 313.7L1085.7 315.9M1075.6 314.9L1077.1 316.9L1079.2 318.0L1081.3 319.2M1085.7 315.9L1083.8 317.9L1081.3 319.2M1080.3 327.7L1081.1 326.6M1080.3 327.7L1078.2 329.4L1075.5 328.9M1081.3 319.2L1080.7 321.7L1081.1 324.1L1081.1 326.6M1103.0 293.7L1103.2 295.5L1102.4 297.1M1093.8 298.7L1096.3 299.3L1097.6 301.6M1097.6 301.6L1100.0 301.0L1100.5 298.3L1102.4 297.1M1041.9 430.0L1040.1 428.7L1038.4 427.2L1037.7 424.9M1037.7 424.9L1035.5 425.2L1033.7 426.3L1031.7 427.1L1030.5 429.1M1025.7 300.6L1025.9 303.3L1028.0 305.0L1029.0 307.2L1030.0 309.5M1037.6 297.5L1037.4 299.6L1037.4 301.8L1037.1 303.9L1037.0 306.1M1030.0 309.5L1032.4 308.5L1034.6 307.2L1037.0 306.1M1020.8 320.4L1022.8 321.4M1030.0 309.5L1029.7 311.5L1029.3 313.5L1029.5 315.6L1029.1 317.6M1059.8 322.5L1062.0 321.3L1064.5 321.5L1066.8 321.5M1059.8 322.5L1059.7 324.9L1058.6 327.4L1060.0 329.7L1060.7 332.0M1067.6 331.5L1065.7 332.3L1063.5 332.1L1061.6 332.9M1061.6 332.9L1060.7 332.0M1059.8 322.5L1059.4 322.0M1062.7 312.0L1060.7 313.9M1060.7 313.9L1060.2 315.9L1060.1 318.0L1060.8 320.1L1059.4 322.0M1054.3 304.0L1054.1 306.6L1053.6 309.1L1054.2 311.7M1060.7 313.9L1058.7 312.6L1056.9 310.8L1054.2 311.7M983.1 348.9L983.8 350.8L984.2 352.7L984.9 354.6M975.9 362.4L977.2 362.5M984.9 354.6L983.2 356.1L981.2 357.2L981.6 360.7L978.6 360.8L977.2 362.5M962.8 392.6L963.7 394.6L964.2 396.7L965.3 398.6L965.9 400.7M962.8 392.6L960.1 392.8L957.6 393.9L954.9 393.4M965.9 400.7L963.8 402.1L961.9 403.9L959.8 405.1L957.2 405.6M954.9 393.4L953.5 395.2L953.2 397.3M953.2 397.3L953.7 399.7L954.1 402.1L954.7 404.5M957.2 405.6L954.7 404.5M951.1 386.7L953.0 388.6L953.5 391.2L954.9 393.4M967.0 387.8L966.0 389.7L964.1 390.9L962.8 392.6M966.7 382.7L966.5 385.3L967.0 387.8M940.6 398.0L943.1 397.9L945.7 397.7L948.2 397.7L950.6 396.7L953.2 397.3M960.5 411.7L960.1 409.3L958.1 407.8L957.2 405.6M970.1 406.1L972.1 407.2L974.3 407.4L976.3 408.3M976.3 408.3L978.2 407.2L978.0 404.5L979.1 402.9L981.2 401.8M981.2 401.8L980.7 399.1L978.4 397.4L977.5 394.9M977.7 412.1L977.6 410.0L976.3 408.3M965.2 413.4L966.4 411.6L967.8 409.8L969.1 408.1L970.1 406.1M977.6 394.2L977.5 394.9M967.0 387.8L969.3 388.8L971.6 389.8L973.6 391.2L975.6 392.7L977.6 394.2M989.9 408.6L989.1 406.6L988.4 404.6M988.4 404.6L985.8 404.2L983.5 403.0L981.2 401.8M1061.6 461.0L1061.8 458.5L1062.5 456.0L1062.0 453.4L1062.6 450.9M1053.0 459.2L1052.8 456.5L1053.1 453.9L1053.6 451.3M1062.6 450.9L1060.4 451.2L1058.1 451.4L1055.9 451.4L1053.6 451.3M1045.1 449.6L1047.0 449.2L1049.0 449.1L1050.8 448.2M1049.9 436.1L1052.4 437.5M1052.4 437.5L1052.9 438.5M1052.9 438.5L1051.0 440.6L1051.9 443.4L1052.7 446.1L1050.8 448.2M1050.8 448.2L1051.6 450.3L1053.6 451.3M1146.5 399.9L1144.2 399.4L1142.5 397.6L1140.8 396.0L1138.3 395.7L1136.2 394.8L1134.0 393.9L1132.1 392.6M1129.0 421.1L1128.4 418.8L1127.8 416.6L1127.1 414.3L1126.4 412.1L1126.1 409.7L1125.3 407.5L1125.0 405.2L1125.3 402.8L1124.4 400.6L1124.2 398.2M1132.1 392.6L1130.6 394.5L1127.9 395.0L1125.6 396.0L1124.2 398.2M1060.8 338.8L1061.2 336.9L1060.9 334.8L1061.6 332.9M1064.1 342.9L1066.7 343.7L1069.4 343.4L1072.1 343.7M1072.1 333.2L1072.2 335.3L1073.9 337.1L1074.7 339.0L1074.0 341.3M1064.1 342.9L1063.7 339.9L1060.8 338.8M1074.0 341.3L1073.3 343.0M1003.2 436.5L1005.9 436.2L1008.3 435.3L1010.6 434.1L1012.7 432.4M1003.2 436.5L1003.5 438.9L1005.7 441.4L1003.0 443.7M1003.0 443.7L1005.4 444.1L1007.1 445.8L1009.0 447.2M1009.0 447.2L1011.1 446.6L1013.1 445.5L1015.1 444.7M998.0 446.2L1000.7 445.5L1003.0 443.7M1016.2 445.0L1015.1 444.7M1221.3 467.8L1223.2 466.1L1225.7 465.0L1226.4 462.2L1228.3 460.5M1239.9 478.7L1240.6 477.1L1241.5 475.6M1241.5 475.6L1240.6 473.4L1239.9 471.1L1240.2 468.5L1238.5 466.5M1228.3 460.5L1230.1 462.2L1232.7 462.4L1234.8 463.5L1236.4 465.4L1238.5 466.5M1256.6 476.7L1255.2 474.5L1252.8 473.9L1250.6 472.9M1250.6 472.9L1249.8 470.3L1249.9 467.8L1250.9 465.3L1251.3 462.8M1251.3 462.8L1253.4 463.2L1255.6 463.0L1257.7 462.9L1259.9 462.6M1258.2 482.1L1257.4 479.4L1256.6 476.7M1241.5 475.6L1243.5 474.1L1245.8 473.4L1248.5 474.2L1250.6 472.9M1248.8 460.5L1247.6 463.1L1245.5 464.4L1242.8 464.4L1241.3 466.6L1238.5 466.5M1248.8 460.5L1251.3 462.8M1271.1 427.1L1269.7 429.2L1270.5 431.8L1270.7 434.3L1267.6 436.0L1268.4 438.6M1282.7 438.1L1280.9 439.3L1279.8 441.3L1278.1 442.5M1278.1 442.5L1275.9 442.2L1273.9 441.6L1272.2 440.2L1270.6 438.8L1268.4 438.6M1256.9 436.9L1255.3 433.9M1256.9 436.9L1259.0 438.6L1261.4 439.4L1263.9 440.0L1266.6 439.6M1310.5 442.1L1308.4 443.0L1306.2 443.6L1304.3 444.7L1302.3 445.5L1300.4 446.7L1298.4 447.6L1297.1 449.7M1301.6 456.6L1299.8 455.0L1298.1 453.2M1297.1 449.7L1297.5 451.4L1298.1 453.2M1292.9 440.5L1292.3 443.3L1293.6 445.5L1295.0 447.6M1297.1 449.7L1295.0 447.6M1286.5 468.8L1287.0 466.8L1286.7 464.7L1286.9 462.7M1298.1 453.2L1296.8 455.3L1294.7 456.7L1292.8 458.3L1290.8 459.8L1288.3 460.7L1286.9 462.7M1225.9 298.0L1226.0 300.3L1225.9 302.6L1226.3 304.9L1226.4 307.1L1227.5 309.3L1226.4 311.7L1227.5 313.9M1225.9 298.0L1223.7 297.9L1221.5 298.2L1219.3 298.7L1217.1 297.8L1214.9 298.0M1227.5 313.9L1225.3 313.5L1223.2 312.9L1220.9 314.0L1218.7 313.9L1216.6 313.6L1214.5 312.3M1214.9 298.0L1214.9 300.5L1214.3 302.9L1213.0 305.1L1211.8 307.4L1212.5 310.0M1212.5 310.0L1214.5 312.3M1228.3 314.9L1227.5 313.9M1214.7 334.4L1216.2 332.2L1215.7 330.0L1216.0 327.7L1216.0 325.5L1215.7 323.3L1213.4 321.1L1213.6 318.9L1213.9 316.7L1213.7 314.5L1214.5 312.3M1203.0 311.8L1205.4 311.6L1207.9 311.7L1210.2 310.8L1212.5 310.0M1199.3 306.2L1199.7 303.6L1198.5 301.1L1199.0 298.5L1199.1 295.9M1199.1 295.9L1197.5 293.9M1190.7 277.6L1192.7 277.6L1194.4 278.9L1196.3 279.3M1197.5 293.9L1198.9 291.3L1197.5 289.0L1198.1 286.5L1198.0 284.0L1197.4 281.6L1196.3 279.3M1155.5 276.0L1155.8 273.1L1154.1 271.3L1151.4 270.0L1150.5 267.7L1150.0 265.2M1155.5 276.0L1157.6 274.9L1159.4 273.3L1160.9 271.3L1162.9 270.1M1150.0 265.2L1151.7 263.8L1153.8 262.7L1155.8 261.5L1156.6 259.3L1157.1 256.9L1158.5 255.1M1161.2 257.0L1158.5 255.1M1154.5 283.5L1154.6 281.0L1155.3 278.5L1155.5 276.0M1146.5 264.3L1148.3 264.8L1150.0 265.2M1166.8 273.7L1165.0 271.7L1162.9 270.1M1156.9 249.8L1157.8 252.4L1158.5 255.1M1165.4 253.4L1163.3 255.2L1161.2 257.0M1087.9 303.3L1089.1 305.2L1090.2 307.2L1091.6 309.1L1093.3 310.7L1094.4 312.7M1097.6 301.6L1096.6 303.7L1097.8 305.9L1097.2 308.0L1097.6 310.2M1094.4 312.7L1095.8 311.2L1097.6 310.2M1048.2 299.4L1048.9 302.0L1045.8 303.2L1045.4 305.4L1046.0 307.9L1044.1 309.6L1043.5 311.7M1037.0 306.1L1037.9 308.8L1040.6 309.8L1042.4 311.7M1043.5 311.7L1042.4 311.7M1029.1 317.6L1031.3 318.6L1033.5 319.9L1035.4 321.5M1042.4 311.7L1040.6 313.4L1040.7 316.5L1038.9 318.1L1036.2 319.1L1035.4 321.5M997.4 353.7L994.8 353.4L993.1 355.4L991.1 356.6L988.8 357.1M978.9 377.4L981.2 376.5L981.4 374.1L982.7 372.4M978.9 377.4L979.9 379.6L979.9 382.2L981.6 384.1L982.3 386.4L984.0 388.2M982.7 372.4L985.2 371.8L987.8 371.5L990.4 371.3L992.7 370.1M995.2 383.7L993.1 384.3L991.6 385.7L990.7 387.9L988.9 388.8M984.0 388.2L986.5 387.8L988.9 388.8M970.8 377.6L972.8 376.4L974.8 377.4L976.9 379.3L978.9 377.4M977.2 362.5L979.3 364.0L979.8 366.3L979.1 369.3L981.0 370.8L982.7 372.4M977.6 394.2L978.8 392.3L980.7 391.1L983.0 390.3L984.0 388.2M988.8 357.1L988.4 359.6L989.9 361.5L989.7 363.9L991.1 365.8L990.3 368.4L992.7 370.1M992.6 396.5L991.9 394.5L989.8 393.1L989.6 390.8L988.9 388.8M1001.9 398.2L999.6 397.3L997.2 397.5L994.8 397.5L992.6 396.5M1001.9 398.2L999.9 395.6L1001.2 393.1L1003.9 390.7L1003.3 388.2L1002.5 385.6M1002.5 385.6L1000.2 384.3L997.6 384.5L995.2 383.7M988.4 404.6L989.6 402.6L990.3 400.4L992.4 398.9L992.6 396.5M1064.1 342.9L1063.1 345.0L1062.3 347.3L1061.0 349.2L1059.8 351.2M1072.1 343.7L1071.4 345.9L1070.2 348.0L1069.9 350.3L1068.5 352.3M1068.5 352.3L1066.5 351.2L1064.4 350.9L1062.1 351.8L1060.0 351.5M1059.8 351.2L1060.0 351.5M1022.8 321.4L1023.0 323.5L1022.9 325.7L1024.8 327.5L1025.7 329.5L1026.7 331.5L1024.9 334.0M1038.5 329.3L1037.8 327.3L1036.6 325.5L1036.8 323.1L1035.4 321.5M1038.5 329.3L1036.5 330.7L1034.7 332.4L1034.7 335.7L1032.1 336.7M1032.1 336.7L1029.8 335.5L1027.1 335.5L1024.9 334.0M1023.6 403.1L1024.5 405.2L1025.1 407.4L1026.1 409.5L1028.6 410.6L1029.1 412.9L1030.3 414.8M1030.6 414.7L1030.3 414.8M1035.7 409.3L1035.5 407.0L1034.7 404.7L1034.9 402.3L1034.7 400.0L1033.6 397.8M1035.7 409.3L1033.4 410.5L1032.2 412.8L1030.6 414.7M1029.8 397.2L1031.9 395.8L1033.6 397.8M1064.0 378.1L1062.3 379.8L1059.9 380.0M1059.9 380.0L1059.2 377.7L1057.0 376.7L1055.6 375.1L1054.6 373.1L1052.7 371.8L1051.7 369.8M1056.2 363.2L1058.0 362.6L1059.9 362.1M1056.2 363.2L1053.7 364.3L1053.6 367.2L1051.7 368.8M1051.7 368.8L1051.7 369.8M1073.0 453.2L1073.7 450.7L1074.4 448.2L1075.7 446.0L1078.0 444.5M1073.0 453.2L1071.3 451.1L1067.8 453.5L1066.2 451.1L1064.1 449.8M1064.1 449.8L1064.5 447.2L1063.2 444.7L1063.8 442.0M1063.8 442.0L1065.5 440.5L1067.8 439.6L1069.2 437.6M1078.0 444.5L1076.6 442.7L1075.6 440.8L1075.1 438.6M1075.1 438.6L1073.1 438.5L1071.3 437.3L1069.2 437.6M1089.2 452.5L1088.5 450.3L1088.2 447.9L1086.6 446.0M1086.6 446.0L1084.7 444.6L1082.5 444.6L1080.1 445.5L1078.0 444.5M1062.6 450.9L1064.1 449.8M1052.9 438.5L1054.8 440.3L1057.2 440.1L1059.4 440.8L1061.5 441.6L1063.8 442.0M1093.0 381.9L1093.1 379.5L1093.7 377.3L1093.8 374.9L1095.1 372.9L1096.4 370.9M1096.7 387.3L1095.4 385.5L1094.4 383.6L1093.0 381.9M1096.7 387.3L1098.6 385.4L1100.9 385.0L1103.1 384.4L1105.5 384.5L1107.8 384.0L1110.0 383.5M1096.4 370.9L1098.5 370.1L1100.9 370.5L1103.0 369.8L1105.3 370.0L1107.3 368.3L1109.6 368.5M1110.0 383.5L1112.0 382.2L1112.4 380.2L1112.5 378.0M1112.5 378.0L1112.9 375.3L1112.2 372.9L1110.1 370.9L1109.6 368.5M1087.7 363.6L1086.4 365.6L1083.2 365.6L1082.3 368.0L1080.2 369.2L1079.0 371.4M1087.7 363.6L1087.1 361.6L1086.0 359.7L1086.6 357.2L1084.8 355.7L1084.0 353.7M1081.6 353.4L1079.4 354.4L1077.8 356.1L1076.1 357.7L1073.8 358.6L1071.8 359.7M1079.0 371.4L1076.3 370.5L1075.4 368.0L1074.0 365.9L1072.2 364.2L1070.9 362.0M1070.9 362.0L1071.8 359.7M1093.0 381.9L1090.7 382.4L1088.8 380.9L1086.5 381.3L1084.3 381.2L1082.7 379.2L1080.7 378.1L1078.5 378.1M1096.4 370.9L1095.4 368.4L1093.0 367.0L1091.9 364.6M1078.5 378.1L1079.4 375.9L1080.4 373.8L1079.0 371.4M1068.5 352.3L1066.1 355.6L1069.0 356.5L1070.8 357.9L1071.8 359.7M1073.3 343.0L1075.4 344.2L1075.8 346.7L1077.3 348.3L1078.3 350.4L1080.3 351.6L1081.6 353.4M1076.5 379.8L1074.5 379.4L1072.4 378.8L1070.2 379.7L1068.1 379.1L1066.1 378.5L1064.0 378.1M1076.5 379.8L1078.5 378.1M1060.0 351.5L1059.0 353.6L1059.9 355.7L1059.7 357.8L1060.3 360.0L1059.9 362.1M1091.9 364.6L1093.9 362.9L1095.6 360.9L1097.4 358.9M1109.6 368.5L1110.0 367.2M1240.8 438.2L1241.9 440.3L1243.4 442.3L1242.4 445.0L1243.7 447.0L1243.7 449.4M1240.8 438.2L1238.6 437.6L1236.3 437.4L1234.0 437.9L1231.8 436.9L1229.6 436.4L1227.3 437.0M1229.1 455.8L1227.6 454.2L1226.0 452.7L1225.9 450.2L1224.1 448.7L1223.9 446.4L1222.2 444.9M1222.2 444.9L1223.7 443.1L1225.8 441.7L1227.0 439.7L1227.3 437.0M1243.2 434.8L1242.5 436.8L1240.8 438.2M1253.7 448.4L1251.4 449.1L1249.1 449.8L1247.0 451.0M1253.7 448.4L1254.7 446.2L1255.6 444.0L1255.7 441.5L1256.3 439.2L1256.9 436.9M1247.0 451.0L1245.4 450.1L1243.7 449.4M1224.9 423.6L1225.6 425.8L1225.9 428.0L1227.0 430.2L1228.5 432.2L1226.4 434.9L1227.3 437.0M1247.0 451.0L1247.8 453.3L1248.1 455.7L1248.0 458.2L1248.8 460.5M1228.3 460.5L1229.1 458.2L1229.1 455.8M1208.5 444.5L1210.8 444.3L1213.1 442.8L1215.3 444.5L1217.6 445.0L1219.9 445.7L1222.2 444.9M1277.7 446.4L1275.6 447.4L1273.2 447.8L1271.3 449.3L1268.9 449.7L1267.0 451.2L1265.0 452.3M1277.7 446.4L1279.2 448.4L1278.9 451.4L1281.4 452.7M1281.0 454.9L1281.4 452.7M1281.0 454.9L1278.8 455.8L1276.6 456.9L1275.1 459.1L1272.6 459.5M1272.6 459.5L1271.1 457.8L1268.4 457.8L1267.3 455.5L1265.2 454.6M1278.1 442.5L1278.4 444.5L1277.7 446.4M1266.6 439.6L1266.4 441.8L1265.9 443.8L1264.8 445.8L1265.2 448.0L1264.7 450.1L1265.0 452.3M1295.0 447.6L1293.0 449.1L1290.7 449.8L1288.6 451.2L1286.2 451.6L1283.8 452.2L1281.4 452.7M1286.9 462.7L1284.9 461.1L1283.3 459.3L1282.8 456.5L1281.0 454.9M1274.0 467.9L1273.3 465.9L1273.9 463.6L1272.0 461.8L1272.6 459.5M1259.9 462.6L1261.8 461.0L1262.6 458.7L1263.8 456.6L1265.2 454.6M1223.3 270.6L1222.1 272.6L1220.4 274.2L1220.0 276.7L1217.7 277.9L1217.0 280.1M1212.6 265.0L1212.2 267.9M1212.2 267.9L1212.6 270.1L1213.8 272.0L1215.1 273.8L1216.4 275.7L1216.3 278.1L1217.0 280.1M1227.1 288.5L1226.2 286.1L1224.0 285.4L1222.2 284.3L1220.1 283.5L1218.3 282.3L1217.0 280.6M1214.9 298.0L1213.1 296.2L1213.3 293.9L1212.2 291.9L1212.4 289.6M1217.0 280.6L1215.3 282.5L1213.2 284.3L1212.7 286.9L1212.4 289.6M1217.0 280.6L1217.0 280.1M1212.4 289.6L1209.5 289.5L1206.9 288.4M1197.8 270.2L1199.6 267.8L1202.6 267.1M1197.3 277.5L1199.7 278.6L1202.4 278.6L1204.9 279.0M1202.6 267.1L1204.6 269.2L1206.0 271.7M1206.0 271.7L1206.4 274.2L1204.9 276.5L1204.9 279.0M1193.6 264.6L1195.1 266.4L1196.9 268.0L1197.8 270.2M1196.3 279.3L1197.3 277.5M1206.9 288.4L1205.3 286.3L1204.8 283.9L1205.1 281.4L1204.9 279.0M1212.2 267.9L1209.9 268.9L1207.4 269.4L1206.0 271.7M1146.4 350.5L1145.1 350.7M1131.9 325.2L1130.0 326.1L1128.3 327.1L1126.3 327.8M1145.1 350.7L1143.1 349.5L1141.1 348.2L1138.8 347.5L1136.5 346.7L1134.2 345.9L1132.4 344.1L1130.0 343.7L1128.1 342.2L1125.8 341.4L1123.7 340.3M1123.7 340.3L1124.8 338.3L1125.0 336.2L1126.0 334.3L1126.0 332.1L1126.3 330.0L1126.3 327.8M1128.3 306.4L1126.6 308.2L1124.7 309.8L1122.5 311.1L1120.6 312.8M1126.3 327.8L1124.7 326.4L1123.9 324.3L1123.5 321.8L1120.7 321.4M1112.4 297.2L1114.6 298.1L1116.5 299.2L1118.5 300.4L1118.3 303.5M1112.4 297.2L1110.9 299.2L1110.2 301.6L1108.7 303.7L1108.0 306.1M1108.0 306.1L1108.2 308.6M1108.2 308.6L1110.7 309.3L1113.3 309.5L1115.8 309.5L1118.3 309.2M1118.3 303.5L1119.3 306.3L1118.3 309.2M1112.2 290.7L1112.6 292.9L1111.8 295.1L1112.4 297.2M1121.5 296.4L1120.5 298.8L1119.5 301.2L1118.3 303.5M1102.4 297.1L1103.9 298.7L1105.3 300.3L1106.9 301.9L1107.8 303.8L1108.0 306.1M1106.1 313.4L1105.2 314.0M1105.2 314.0L1103.3 313.0L1101.7 311.4L1099.8 310.6L1097.6 310.2M1120.7 321.4L1118.5 321.3L1116.6 322.7L1114.4 322.5M1106.1 313.4L1108.5 314.6L1110.2 316.3L1112.2 317.9L1113.2 320.3L1114.4 322.5M1120.6 312.8L1119.5 311.0L1118.3 309.2M1105.2 314.0L1104.7 316.0L1104.0 317.9L1103.2 319.8L1102.5 321.8M1107.0 331.9L1105.3 330.4M1105.3 330.4L1104.2 328.3L1103.2 326.3L1102.7 324.1L1102.5 321.8M1076.5 379.8L1077.5 382.1L1077.3 384.3L1075.5 386.4L1076.1 388.7L1075.5 390.9M1055.6 387.8L1057.1 386.1L1057.7 383.9L1059.1 382.1L1059.9 380.0M1055.6 387.8L1056.8 390.6M1056.8 390.6L1059.1 391.7L1061.1 393.3L1063.5 394.0L1065.7 395.1M1075.5 390.9L1073.0 390.5L1071.4 392.2L1069.6 393.2L1067.6 394.0L1065.7 395.1M1035.7 409.3L1037.8 409.3L1039.9 408.2L1041.9 409.4L1044.0 409.3M1038.5 395.3L1036.2 396.8L1033.6 397.8M1038.5 395.3L1040.1 397.0L1041.8 398.4L1044.0 399.4L1045.8 400.9L1046.9 403.0L1048.6 404.5M1044.0 409.3L1045.4 407.6L1047.3 406.3L1048.6 404.5M1037.9 421.1L1036.4 419.1L1034.5 417.6L1032.9 415.8L1030.6 414.7M1037.9 421.1L1040.5 420.4L1042.8 419.0L1045.2 418.0M1044.0 409.3L1044.4 411.5L1045.2 413.6L1044.5 415.9L1045.2 418.0M1056.8 390.6L1056.3 393.1L1055.9 395.6L1054.6 397.7L1052.8 399.6L1052.7 402.2L1051.0 404.2M1065.7 395.1L1065.9 397.6L1065.7 400.2L1065.7 402.7L1066.8 405.1M1057.9 410.0L1056.5 408.1L1054.8 406.7L1052.6 405.7L1051.0 404.2M1046.6 430.9L1048.2 429.3L1049.0 427.3L1049.4 425.1L1050.5 423.2L1050.8 421.0M1037.7 424.9L1037.9 423.0L1037.9 421.1M1045.2 418.0L1047.1 419.0L1049.4 419.2L1050.8 421.0M1060.0 429.1L1062.7 429.2L1065.4 429.3M1060.0 429.1L1058.6 427.5L1057.3 425.8L1056.6 423.7L1055.0 422.2L1054.2 420.1M1065.4 429.3L1067.1 427.6L1067.7 425.1L1068.5 422.8L1070.8 421.4M1054.2 420.1L1054.7 417.9L1056.7 416.9L1058.0 415.3M1058.0 415.3L1060.3 415.7L1062.3 416.9L1064.3 418.1L1066.8 418.0L1068.4 419.9L1070.5 420.8M1070.5 420.8L1070.8 421.4M1069.2 437.6L1068.3 435.5L1067.3 433.5L1065.6 431.7L1065.4 429.3M1052.4 437.5L1054.3 436.2L1055.5 434.2L1057.4 432.9L1059.1 431.4L1060.0 429.1M1057.9 410.0L1058.2 412.6L1058.0 415.3M1048.6 404.5L1051.0 404.2M1073.6 408.4L1073.0 410.5L1073.5 412.8L1072.3 414.7L1072.4 416.9L1072.0 419.0L1070.5 420.8M1066.8 405.1L1068.5 407.4L1071.1 407.8L1073.6 408.4M999.7 425.4L1001.0 424.6M1001.2 410.1L1002.8 411.8L1004.1 413.6L1004.2 416.1M1001.0 424.6L1001.8 422.5L1001.7 420.0L1003.8 418.4L1004.2 416.1M1014.1 394.0L1012.9 396.2L1011.5 398.0L1009.8 399.7L1007.6 400.7L1005.7 402.1M1014.1 394.0L1014.8 396.7L1017.4 397.7L1018.9 399.7L1021.0 401.2L1022.4 403.3M1022.4 403.3L1021.2 405.3L1019.8 407.0L1017.9 407.9L1015.6 408.6M1015.6 408.6L1013.8 407.4L1011.8 406.3L1009.6 405.9L1007.8 404.5L1005.8 403.5M1005.7 402.1L1005.8 403.5M1001.9 398.2L1003.8 400.2L1005.7 402.1M1014.8 391.7L1013.4 389.5L1012.1 387.3L1010.0 385.6L1009.2 383.1M1002.5 385.6L1004.4 384.0L1007.0 384.0L1009.2 383.1M1014.8 391.7L1014.1 394.0M1023.6 403.1L1022.4 403.3M1024.5 389.4L1026.4 390.9L1028.5 392.4L1029.4 394.6L1029.8 397.2M1014.8 391.7L1017.3 391.6L1019.6 390.2L1022.0 389.6L1024.5 389.4M1001.2 410.1L1003.1 408.2L1003.5 405.2L1005.8 403.5M1059.4 322.0L1057.0 321.9L1054.7 321.5M1054.2 311.7L1052.5 314.4M1052.5 314.4L1052.7 316.9L1052.5 319.6L1054.7 321.5M1043.5 311.7L1044.4 313.4L1046.0 314.6M1052.5 314.4L1050.3 314.8L1048.2 314.1L1046.0 314.6M997.4 353.7L999.9 354.2L999.9 356.8L1000.7 358.7L1002.5 359.9M1000.2 368.6L1001.4 366.5L1001.4 364.2L1001.9 362.1L1002.5 359.9M1060.8 338.8L1059.2 340.1L1056.8 339.5L1055.5 341.4M1059.8 351.2L1057.1 350.9L1054.9 349.2M1054.9 349.2L1055.1 346.6L1054.4 343.9L1055.5 341.4M1051.7 369.8L1050.0 371.0L1048.7 372.8L1046.9 373.9L1045.2 375.1M1045.2 375.1L1045.6 377.3L1045.9 379.5L1046.0 381.7L1045.1 383.8L1044.2 385.8M1038.5 395.3L1038.5 392.7L1040.2 390.8L1041.3 388.7L1042.4 386.5M1044.2 385.8L1042.4 386.5M1130.2 367.8L1129.5 369.9L1127.6 371.3L1126.9 373.4L1125.6 375.2L1125.3 377.5M1130.2 367.8L1132.7 368.3L1134.8 369.6L1136.2 371.9L1138.0 373.5L1139.6 375.6L1141.5 377.1L1144.2 377.5M1125.3 377.5L1126.7 379.5L1127.0 382.2L1129.2 383.8L1130.0 386.2L1130.8 388.5L1132.4 390.4M1144.2 377.5L1142.5 378.9L1142.0 381.4L1140.8 383.3L1139.5 385.1L1137.0 385.7L1136.0 387.8L1134.2 389.1L1132.4 390.4M1112.5 378.0L1114.6 376.8L1116.8 377.2L1118.9 377.8L1121.1 378.5L1123.2 378.4L1125.3 377.5M1110.0 367.2L1112.5 367.1L1115.3 367.4L1117.0 365.9L1118.1 363.3L1120.2 362.3L1121.9 360.7M1121.9 360.7L1124.0 361.1L1125.8 362.4L1128.1 362.5L1129.7 364.2M1129.7 364.2L1130.2 365.9L1130.2 367.8M1145.1 350.7L1143.1 351.9L1141.9 354.0L1138.8 353.8L1139.1 357.7L1137.7 359.5L1135.9 360.9L1134.2 362.4L1131.7 363.0L1129.7 364.2M1110.0 383.5L1111.2 385.6L1112.6 387.5L1115.0 388.8L1116.2 390.8L1117.4 392.9L1117.6 395.6L1119.2 397.4M1124.2 398.2L1121.6 398.6L1119.2 397.4M1132.1 392.6L1132.4 390.4M1121.9 360.7L1121.7 358.3L1120.1 356.2L1120.4 353.7L1120.6 351.2L1119.7 349.0L1119.0 346.7L1117.7 344.5M1106.5 351.4L1108.5 350.5L1110.8 350.1L1112.7 349.0L1114.8 348.1L1116.5 346.6L1117.7 344.5M1107.0 331.9L1107.5 334.3M1123.7 340.3L1122.0 341.8L1120.3 343.4L1117.9 344.0M1107.5 334.3L1108.7 336.5L1110.6 337.9L1111.3 340.7L1114.0 341.2L1116.1 342.5L1117.9 344.0M1117.7 344.5L1117.9 344.0M1080.3 327.7L1081.4 330.3L1082.7 332.7M1074.0 341.3L1076.4 341.5L1078.7 340.9L1080.8 339.6M1082.7 332.7L1081.4 334.8L1081.5 337.3L1080.8 339.6M1085.4 352.3L1085.7 349.8L1085.3 347.2L1084.6 344.5L1086.5 342.2M1085.4 352.3L1087.5 352.0L1089.7 352.2L1091.9 352.6L1093.7 350.9M1093.7 350.9L1094.8 348.9L1097.2 348.0L1098.2 345.8M1086.5 342.2L1088.6 340.7M1088.6 340.7L1091.0 342.7L1093.8 341.2L1096.4 341.6M1098.2 345.8L1097.6 342.6M1096.4 341.6L1097.6 342.6M1084.0 353.7L1085.4 352.3M1080.8 339.6L1082.8 340.2L1084.6 341.4L1086.5 342.2M1097.4 358.9L1096.7 356.8L1095.3 355.1L1094.5 353.0L1093.7 350.9M1106.5 351.4L1104.3 350.2L1102.8 347.9L1100.5 346.9L1098.2 345.8M1088.3 333.9L1087.5 336.2L1088.4 338.4L1088.6 340.7M1094.9 331.4L1092.5 330.9L1090.2 331.5M1095.6 330.6L1094.6 328.5L1094.9 326.4L1095.3 324.2L1095.0 322.1M1090.2 331.5L1089.1 328.8L1087.9 326.3M1087.9 326.3L1088.4 324.1L1088.7 321.9L1090.3 320.3L1091.8 318.7M1095.0 322.1L1094.1 319.8L1091.8 318.7M1088.3 333.9L1090.2 331.5M1096.4 341.6L1096.1 339.6L1096.4 337.5L1096.1 335.4L1096.3 333.3L1094.9 331.4M1105.3 330.4L1102.8 330.8L1100.4 330.7L1098.0 331.7L1095.6 330.6M1102.5 321.8L1100.0 322.6L1097.5 322.1L1095.0 322.1M1081.1 326.6L1083.3 325.6L1085.6 325.8L1087.9 326.3M1085.7 315.9L1087.5 317.3L1089.6 318.1L1091.8 318.7M1094.4 312.7L1094.7 315.2L1092.6 316.7L1091.8 318.7M1075.1 438.6L1076.7 437.0L1078.1 435.3L1080.2 434.1L1081.7 432.5L1082.7 430.5L1083.0 427.9M1083.0 427.9L1082.4 425.8M1086.6 446.0L1087.5 444.0L1088.3 442.0L1090.1 440.6L1091.3 438.8L1092.8 437.3L1094.3 435.7M1083.0 427.9L1084.7 429.5L1086.2 431.3L1088.2 432.4L1089.8 434.2L1092.2 434.8L1094.3 435.7M1094.3 435.7L1096.7 435.7L1099.0 435.4M1085.6 401.2L1084.5 402.9L1084.6 404.9M1084.6 404.9L1085.9 407.2L1087.1 409.4L1088.6 411.6L1089.2 414.2M1095.0 394.4L1097.7 394.7L1098.7 397.2L1099.9 399.4L1101.8 400.7L1104.0 401.7L1105.2 403.9L1107.7 404.4M1089.2 414.2L1091.4 414.4L1093.2 416.0L1095.2 416.8L1097.3 417.6L1099.7 416.5M1107.7 404.4L1106.9 406.7L1106.4 409.0L1107.8 411.7L1106.0 413.8M1106.0 413.8L1103.9 414.7L1102.4 417.1L1099.7 416.5M1075.5 390.9L1076.8 393.0L1078.2 395.0L1080.2 396.4L1081.7 398.3L1083.2 400.1L1085.6 401.2M1096.7 387.3L1095.2 389.4L1094.6 391.8L1095.0 394.4M1082.4 425.8L1083.8 424.0L1085.3 422.3L1085.7 419.9L1086.0 417.5L1087.9 416.0L1089.2 414.2M1119.2 397.4L1117.9 399.6L1116.4 401.4L1113.7 401.3L1110.7 400.7L1110.5 404.7L1107.7 404.4M1099.0 435.4L1099.9 433.1L1098.2 430.6L1098.8 428.3L1098.0 425.9L1097.9 423.5L1098.2 421.2L1098.4 418.8L1099.7 416.5M1123.6 426.6L1121.2 425.7L1120.1 423.2L1118.2 421.6L1115.5 421.3L1113.0 420.6L1110.8 419.5L1110.1 416.4L1107.2 416.3L1106.0 413.8M1014.1 430.1L1013.4 428.1M1013.4 428.1L1013.7 425.9L1014.2 423.7L1015.1 421.6L1014.5 419.3M1021.9 431.3L1023.9 429.1L1026.5 427.9M1026.5 427.9L1027.0 425.8L1025.6 423.7L1026.1 421.7L1025.0 419.6L1026.3 417.5M1026.3 417.5L1024.1 417.1L1021.9 416.6L1019.7 415.9L1017.4 416.5M1017.4 416.5L1016.2 418.1L1014.5 419.3M1024.8 438.9L1024.9 436.7L1023.6 435.0L1022.5 433.2L1021.9 431.3M1012.7 432.4L1014.1 430.1M1001.0 424.6L1003.1 425.0L1005.3 425.3L1007.1 426.6L1009.5 426.2L1011.5 426.8L1013.4 428.1M1004.2 416.1L1006.4 416.2L1008.5 416.7L1010.2 418.5L1012.3 419.0L1014.5 419.3M1030.5 429.1L1028.3 429.3L1026.5 427.9M1030.3 414.8L1028.4 416.3L1026.3 417.5M1015.6 408.6L1017.5 410.9L1017.4 413.7L1017.4 416.5M1051.6 325.3L1050.0 324.2L1048.4 323.1L1046.2 323.2M1052.5 331.3L1051.1 333.1L1050.2 335.2L1048.4 336.7M1039.2 329.3L1041.1 328.0L1043.2 326.8L1044.6 324.9L1046.2 323.2M1039.2 329.3L1041.8 329.8L1043.4 331.5L1044.3 334.2L1046.2 335.5L1048.2 336.7M1046.0 314.6L1045.8 316.8L1046.5 318.9L1046.6 321.0L1046.2 323.2M1054.7 321.5L1053.0 323.3L1051.6 325.3M1060.7 332.0L1058.7 331.2L1056.7 330.8L1054.7 330.0L1052.5 331.3M1055.5 341.4L1053.7 340.2L1052.2 338.7L1050.9 336.8L1048.4 336.7M1038.5 329.3L1039.2 329.3M1011.2 355.7L1012.6 356.8M1012.6 356.8L1013.2 359.0L1012.0 361.6L1012.9 363.8L1014.3 365.9L1014.5 368.2M1002.5 359.9L1004.3 358.0L1006.7 357.6L1008.8 356.2L1011.2 355.7M1000.2 368.6L1002.5 369.1L1004.8 369.8L1006.4 372.0L1008.7 372.4M1014.5 368.2L1012.4 369.3L1010.8 371.2L1008.7 372.4M1009.2 383.1L1009.8 381.4M1009.8 381.4L1009.3 379.2L1010.0 376.8L1009.2 374.7L1008.7 372.4M1056.2 363.2L1054.5 361.9L1053.7 359.9L1050.7 359.8L1048.9 358.6L1049.3 355.5M1054.9 349.2L1052.4 350.1L1050.0 350.9M1049.3 355.5L1050.7 353.4L1050.0 350.9M1048.2 336.7L1047.1 339.0L1047.2 341.8L1045.3 343.7L1044.0 345.9M1050.0 350.9L1048.0 349.2L1046.0 347.5L1044.0 345.9M1032.1 336.7L1033.0 340.0M1033.0 340.0L1034.7 341.3L1036.7 342.2L1038.1 343.9L1040.0 344.9L1041.6 346.4M1041.6 346.4L1044.0 345.9M1026.3 355.3L1028.5 356.1L1029.4 358.9L1031.8 359.1L1034.0 359.7L1035.8 361.0L1037.7 362.1L1039.7 363.1M1026.3 355.3L1026.2 354.6M1026.2 354.6L1026.4 353.9M1039.7 363.1L1041.1 362.2M1041.1 362.2L1041.5 361.1M1026.2 352.2L1026.4 353.9M1033.0 340.0L1031.6 341.9L1031.9 344.7L1030.2 346.4L1028.4 348.1L1027.5 350.2L1026.2 352.2M1049.3 355.5L1047.3 356.8L1045.4 358.3L1043.0 359.1L1041.5 361.1M1045.2 375.1L1043.4 374.0L1041.3 373.4L1039.8 371.8L1037.5 371.5L1036.2 369.5M1036.2 369.5L1037.1 367.2L1038.4 365.2L1039.7 363.1M1051.7 368.8L1049.9 367.0L1048.0 365.3L1045.9 364.0L1043.4 363.3L1041.1 362.2M1019.3 344.5L1017.7 346.1L1016.1 347.5L1013.8 347.7L1012.5 349.8L1010.0 349.6M1013.2 335.3L1012.2 337.7L1009.4 338.8L1009.0 341.7L1008.9 344.6L1006.2 345.8M1013.2 335.3L1015.6 335.3L1017.5 336.4L1019.4 337.7M1006.2 345.8L1009.3 346.5L1010.0 349.6M1026.2 352.2L1024.4 350.3L1022.5 348.6L1020.6 346.9L1019.3 344.5M1012.6 356.8L1014.7 355.8L1017.0 355.6L1019.3 355.3L1021.6 354.9L1024.0 355.7L1026.2 354.6M1011.2 355.7L1011.7 353.5L1010.6 351.6L1010.0 349.6M1024.9 334.0L1023.4 335.7L1021.1 336.2L1019.4 337.7M1008.9 327.9L1009.6 329.9L1010.8 331.8L1012.8 333.1L1013.2 335.3M1001.2 344.8L1003.7 345.5L1006.2 345.8M1036.0 369.6L1035.9 372.1L1035.8 374.5L1035.0 376.6L1033.0 378.3L1031.6 380.2M1036.0 369.6L1033.6 369.2L1031.3 368.6L1029.0 368.0L1027.0 366.9L1025.1 365.2M1025.1 365.2L1021.6 365.5L1021.0 369.0M1021.0 369.0L1021.2 371.2L1021.3 373.5L1022.6 375.4L1024.1 377.2L1024.9 379.2M1031.6 380.2L1029.4 380.3L1027.3 381.2M1027.3 381.2L1024.9 379.2M1042.4 386.5L1040.1 385.4L1038.1 383.9L1036.3 382.1L1033.3 382.3L1031.6 380.2M1026.3 355.3L1024.8 357.6L1025.3 360.2L1025.7 362.8L1025.1 365.2M1014.5 368.2L1016.8 367.4L1019.0 367.6L1021.0 369.0M1009.8 381.4L1011.9 380.8L1014.2 381.5L1016.4 381.0L1018.5 380.6L1020.9 382.3L1022.8 380.0L1024.9 379.2M1024.5 389.4L1025.0 387.2L1026.4 385.4L1027.9 383.7L1027.3 381.2" fill="none" stroke="#2e2e2e" stroke-width="0.85" stroke-linejoin="round" stroke-linecap="round"/>
<path d="M1116.5 315.9L1118.6 315.7L1120.6 315.0L1122.7 314.8L1125.4 316.2L1128.2 317.2L1130.8 317.6L1133.0 319.0L1135.6 319.4L1137.2 320.9L1138.1 322.8L1140.1 324.1L1141.7 325.8L1142.2 327.9L1142.4 330.1L1140.1 330.4L1138.1 331.4L1136.0 331.8L1134.0 332.2L1131.9 332.6L1129.8 333.0L1127.8 333.8L1125.8 334.4L1123.7 334.8L1121.7 335.5L1119.6 336.0L1117.8 335.1L1120.0 332.9L1121.4 330.1L1119.6 327.1L1121.1 324.6L1120.3 322.5L1119.6 320.3L1117.3 318.6Z" fill="#0e5e50" stroke="#333" stroke-width="0.8" stroke-linejoin="round"/>
</svg>
<div class="t" style="left:966px;top:536.5px;width:300px;text-align:center;color:#777;font-size:11.65px">Quanto mais escuro, maior o valor em diárias</div>

<!-- KPI cards -->
<div class="card" style="left:11px;top:559px;width:200.5px;height:91px"></div>
<div class="acc" style="top:564px;height:69.5px"></div>
<div class="kv" style="top:566px">13,504.52</div>
<div class="kl" style="top:581px">Qtd Diárias</div>
<div class="kv" style="top:605px">235.15</div>
<div class="kl" style="top:620px">Valor Médio (R$)</div>

<div class="card" style="left:11px;top:670.5px;width:201px;height:83px"></div>
<div class="acc" style="top:676px;height:68.5px"></div>
<div class="kv" style="top:677px">3,175,567.07</div>
<div class="kl" style="top:692.5px">Valor Liquidado (R$)</div>
<div class="kv" style="top:715.5px">3,175,567.07</div>
<div class="kl" style="top:730.5px">Valor Pago (R$)</div>

<!-- table 1 -->
<div class="card" style="left:229.5px;top:559px;width:585.5px;height:238.5px"></div>
<div class="ttl" style="left:229.5px;top:559px;width:585.5px">Top 10 Destinos por Quantidade de Diárias</div>
<div class="c" style="left:234.8px;top:578px;width:200px;text-align:center">Destino</div>
<div class="c" style="left:389.9px;top:578px;width:200px;text-align:center">Qtd Diárias</div>
<div class="c" style="left:512.2px;top:578px;width:200px;text-align:center">Valor Diárias</div>
<div class="c" style="left:625.9px;top:578px;width:200px;text-align:center">Qtd Entidades</div>
<svg class="abs" style="left:441px;top:593.5px" width="9" height="5" viewBox="0 0 9 5"><polygon points="0,0 8.4,0 4.2,4.2" fill="#111"/></svg>
<div class="row g" style="left:235.0px;top:601.0px;width:537.5px"></div>
<div class="c" style="left:241px;top:603.5px;letter-spacing:0.22px">CURITIBA/PR</div>
<div class="c r" style="left:419.5px;width:120px;top:603.5px">6,072.03</div>
<div class="c r" style="left:553.0px;width:120px;top:603.5px">2,187,805.00</div>
<div class="c r" style="left:647.0px;width:120px;top:603.5px">2</div>
<div class="row w" style="left:235.0px;top:619.0px;width:537.5px"></div>
<div class="c" style="left:241px;top:621.5px;letter-spacing:0.22px">APUCARANA/PR</div>
<div class="c r" style="left:419.5px;width:120px;top:621.5px">2,781.22</div>
<div class="c r" style="left:553.0px;width:120px;top:621.5px">207,326.74</div>
<div class="c r" style="left:647.0px;width:120px;top:621.5px">2</div>
<div class="row g" style="left:235.0px;top:637.1px;width:537.5px"></div>
<div class="c" style="left:241px;top:639.6px;letter-spacing:0.22px">LONDRINA/PR</div>
<div class="c r" style="left:419.5px;width:120px;top:639.6px">1,020.33</div>
<div class="c r" style="left:553.0px;width:120px;top:639.6px">86,832.34</div>
<div class="c r" style="left:647.0px;width:120px;top:639.6px">2</div>
<div class="row w" style="left:235.0px;top:655.1px;width:537.5px"></div>
<div class="c" style="left:241px;top:657.6px;letter-spacing:0.22px">ARAPONGAS/PR</div>
<div class="c r" style="left:419.5px;width:120px;top:657.6px">800.00</div>
<div class="c r" style="left:553.0px;width:120px;top:657.6px">65,035.00</div>
<div class="c r" style="left:647.0px;width:120px;top:657.6px">2</div>
<div class="row g" style="left:235.0px;top:673.2px;width:537.5px"></div>
<div class="c" style="left:241px;top:675.7px;letter-spacing:0.22px">JANDAIA DO SUL/PR</div>
<div class="c r" style="left:419.5px;width:120px;top:675.7px">558.33</div>
<div class="c r" style="left:553.0px;width:120px;top:675.7px">42,851.50</div>
<div class="c r" style="left:647.0px;width:120px;top:675.7px">1</div>
<div class="row w" style="left:235.0px;top:691.2px;width:537.5px"></div>
<div class="c" style="left:241px;top:693.7px;letter-spacing:0.22px">IVAIPORÃ/PR</div>
<div class="c r" style="left:419.5px;width:120px;top:693.7px">391.00</div>
<div class="c r" style="left:553.0px;width:120px;top:693.7px">30,752.50</div>
<div class="c r" style="left:647.0px;width:120px;top:693.7px">1</div>
<div class="row g" style="left:235.0px;top:709.3px;width:537.5px"></div>
<div class="c" style="left:241px;top:711.8px;letter-spacing:0.22px">BRASILIA/DF</div>
<div class="c r" style="left:419.5px;width:120px;top:711.8px">367.34</div>
<div class="c r" style="left:553.0px;width:120px;top:711.8px">274,280.00</div>
<div class="c r" style="left:647.0px;width:120px;top:711.8px">2</div>
<div class="row w" style="left:235.0px;top:727.3px;width:537.5px"></div>
<div class="c" style="left:241px;top:729.8px;letter-spacing:0.22px">MARINGÁ/PR</div>
<div class="c r" style="left:419.5px;width:120px;top:729.8px">280.50</div>
<div class="c r" style="left:553.0px;width:120px;top:729.8px">30,336.76</div>
<div class="c r" style="left:647.0px;width:120px;top:729.8px">2</div>
<div class="row g" style="left:235.0px;top:745.4px;width:537.5px"></div>
<div class="c" style="left:241px;top:747.9px;letter-spacing:0.22px">FOZ DO IGUAÇU/PR</div>
<div class="c r" style="left:419.5px;width:120px;top:747.9px">276.43</div>
<div class="c r" style="left:553.0px;width:120px;top:747.9px">110,277.66</div>
<div class="c r" style="left:647.0px;width:120px;top:747.9px">2</div>
<div class="row w" style="left:235.0px;top:763.4px;width:537.5px"></div>
<div class="c" style="left:241px;top:765.9px;letter-spacing:0.22px">ROLÂNDIA/PR</div>
<div class="c r" style="left:419.5px;width:120px;top:765.9px">258.00</div>
<div class="c r" style="left:553.0px;width:120px;top:765.9px">20,895.00</div>
<div class="c r" style="left:647.0px;width:120px;top:765.9px">1</div>
<div class="hl" style="left:235.0px;top:600px;width:537.5px"></div>
<div class="vl" style="left:434.1px;top:576px;height:205.5px"></div>
<div class="vl" style="left:544.8px;top:576px;height:205.5px"></div>
<div class="vl" style="left:678.7px;top:576px;height:205.5px"></div>

<!-- table 2 -->
<div class="ttl" style="left:833px;top:559px;width:585.5px">Objetivo da Diária</div>
<div class="abs w" style="left:839.0px;top:576px;width:565.7px;height:25px"></div>
<div class="c" style="left:873.8px;top:578px;width:200px;text-align:center">Tipo Objetivo</div>
<div class="c" style="left:1070.7px;top:578px;width:200px;text-align:center">Qtd Diárias</div>
<div class="c" style="left:1218.7px;top:578px;width:200px;text-align:center">Valor Total Diárias (R$)</div>
<svg class="abs" style="left:845px;top:593.7px" width="9" height="5" viewBox="0 0 9 5"><polygon points="0,4.2 8.4,4.2 4.2,0" fill="#111"/></svg>
<div class="row g" style="left:839.0px;top:601.0px;width:565.7px;height:18.0px"></div>
<div class="abs" style="left:1115.6px;top:603.2px;width:16.2px;height:14.3px;background:#02b3a1"></div>
<div class="abs" style="left:1239.6px;top:603.2px;width:27.4px;height:14.3px;background:#76d7c4"></div>
<div class="c" style="left:845px;top:603.5px;line-height:14.5px">Cursos não ligados ao TCE/PR</div>
<div class="c r" style="left:1106.3px;width:120px;top:603.5px">1,038.64</div>
<div class="c r" style="left:1279.2px;width:120px;top:603.5px">306,118.00</div>
<div class="row w" style="left:839.0px;top:619.0px;width:565.7px;height:18.1px"></div>
<div class="abs" style="left:1115.6px;top:621.2px;width:8.9px;height:14.3px;background:#02b3a1"></div>
<div class="abs" style="left:1239.6px;top:621.2px;width:21.7px;height:14.3px;background:#76d7c4"></div>
<div class="c" style="left:845px;top:621.5px;line-height:14.5px">Eventos não ligados ao TCE/PR</div>
<div class="c r" style="left:1106.3px;width:120px;top:621.5px">568.80</div>
<div class="c r" style="left:1279.2px;width:120px;top:621.5px">241,818.06</div>
<div class="row g" style="left:839.0px;top:637.1px;width:565.7px;height:18.0px"></div>
<div class="abs" style="left:1115.6px;top:639.3px;width:72.9px;height:14.3px;background:#02b3a1"></div>
<div class="abs" style="left:1239.6px;top:639.3px;width:159.6px;height:14.3px;background:#76d7c4"></div>
<div class="c" style="left:845px;top:639.6px;line-height:14.5px">Outros Objetivos não ligados ao TCE/PR</div>
<div class="c r" style="left:1106.3px;width:120px;top:639.6px">4,681.45</div>
<div class="c r" style="left:1279.2px;width:120px;top:639.6px">1,782,323.35</div>
<div class="row w" style="left:839.0px;top:655.1px;width:565.7px;height:18.1px"></div>
<div class="abs" style="left:1115.6px;top:657.3px;width:111.2px;height:14.3px;background:#02b3a1"></div>
<div class="abs" style="left:1239.6px;top:657.3px;width:72.6px;height:14.3px;background:#76d7c4"></div>
<div class="c" style="left:845px;top:657.6px;line-height:14.5px">Transporte de Pacientes</div>
<div class="c r" style="left:1106.3px;width:120px;top:657.6px">7,137.63</div>
<div class="c r" style="left:1279.2px;width:120px;top:657.6px">811,115.00</div>
<div class="row g" style="left:839.0px;top:673.2px;width:565.7px;height:33.2px"></div>
<div class="abs" style="left:1115.6px;top:675.4px;width:0.7px;height:29.7px;background:#02b3a1"></div>
<div class="abs" style="left:1239.6px;top:675.4px;width:1.6px;height:29.7px;background:#76d7c4"></div>
<div class="c" style="left:845px;top:675.7px;line-height:14.5px">Tribunal de Contas do Estado do Paraná <span style="display:inline-block;transform:scaleX(1.55);transform-origin:0 50%">–</span><br>Eventos e Treinamentos</div>
<div class="c r" style="left:1106.3px;width:120px;top:675.7px">42.00</div>
<div class="c r" style="left:1279.2px;width:120px;top:675.7px">18,392.66</div>
<div class="row w" style="left:839.0px;top:706.4px;width:565.7px;height:32.5px"></div>
<div class="abs" style="left:1115.6px;top:708.6px;width:0.6px;height:29.0px;background:#02b3a1"></div>
<div class="abs" style="left:1239.6px;top:708.6px;width:1.4px;height:29.0px;background:#76d7c4"></div>
<div class="c" style="left:845px;top:708.9px;line-height:14.5px">Tribunal de Contas do Estado do Paraná <span style="display:inline-block;transform:scaleX(1.55);transform-origin:0 50%">–</span><br>Outros Objetivos</div>
<div class="c r" style="left:1106.3px;width:120px;top:708.9px">36.00</div>
<div class="c r" style="left:1279.2px;width:120px;top:708.9px">15,800.00</div>
<div class="hl" style="left:839.0px;top:600px;width:565.7px"></div>
<div class="vl" style="left:1108.1px;top:576px;height:162.9px"></div>
<div class="vl" style="left:1232.2px;top:576px;height:162.9px"></div>
<div class="abs" style="left:1114.6px;top:601px;width:0;height:137.9px;border-left:1px dotted #0b5c52"></div>
<div class="abs" style="left:1238.6px;top:601px;width:0;height:137.9px;border-left:1px dotted #0b5c52"></div>
</body>
</html>
